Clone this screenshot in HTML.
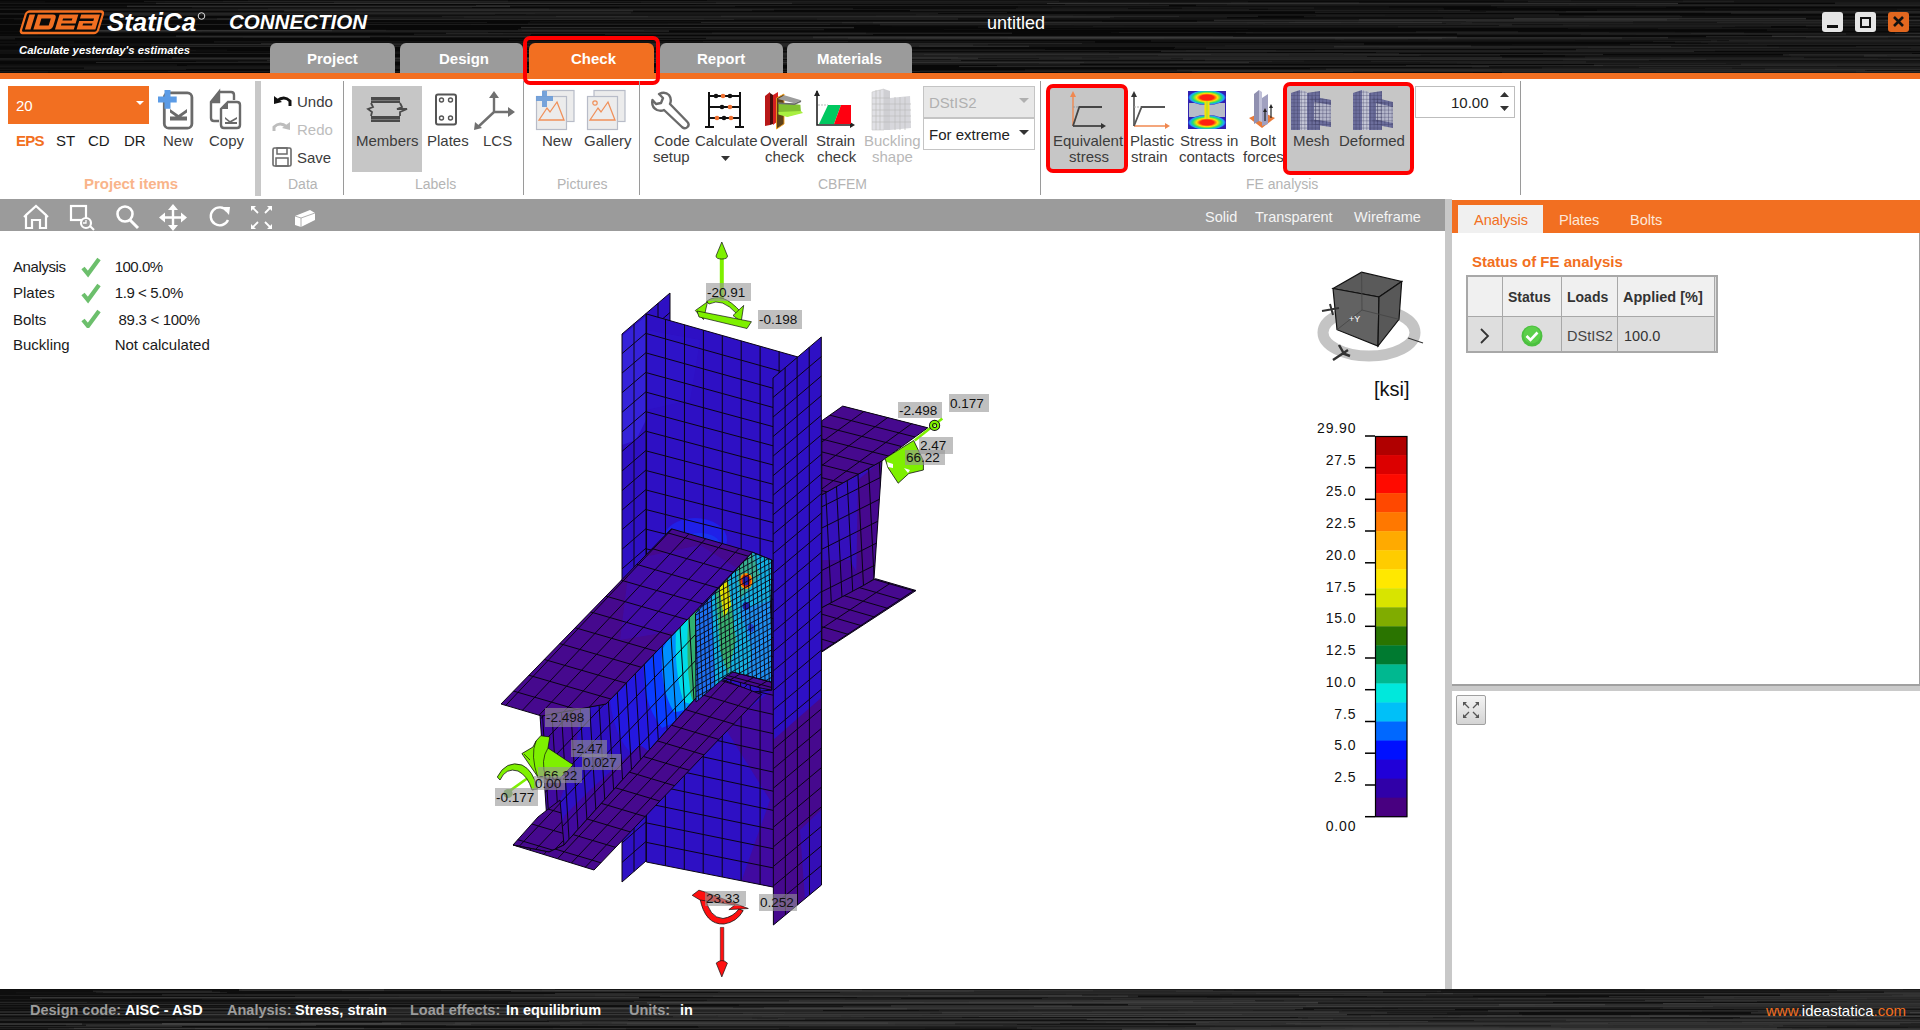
<!DOCTYPE html>
<html><head><meta charset="utf-8"><style>
html,body{margin:0;padding:0;width:1920px;height:1030px;overflow:hidden;background:#fff;position:relative;font-family:"Liberation Sans",sans-serif;}
.a{position:absolute;white-space:pre;line-height:1;}
#title{position:absolute;left:0;top:0;width:1920px;height:73px;overflow:hidden;}
#status{position:absolute;left:0;top:989px;width:1920px;height:41px;overflow:hidden;}
#ostripe{position:absolute;left:0;top:73px;width:1920px;height:6px;background:#f26f21;}
.tab{position:absolute;top:43px;height:30px;background:#9b9b9b;border-radius:6px 6px 0 0;}
.tabt{position:absolute;top:51px;color:#fff;font-weight:bold;font-size:15px;}
.redbox{position:absolute;border:4px solid #ff0000;border-radius:7px;box-sizing:border-box;}
.sep{position:absolute;top:81px;width:1px;height:114px;background:#9a9a9a;}
.rt{position:absolute;font-size:15px;color:#3c3c3c;white-space:pre;line-height:1;}
.glab{position:absolute;top:176.5px;font-size:14px;color:#b4b4b4;white-space:pre;line-height:1;}
.hl{position:absolute;background:#c6c6c6;}
.wbtn{position:absolute;top:12px;width:21px;height:20px;background:#e6e6e6;border-radius:3px;}
.lbl{position:absolute;background:rgba(150,150,150,0.6);font-size:13.5px;color:#111;line-height:1;white-space:pre;}
.res{position:absolute;font-size:15px;color:#1a1a1a;white-space:pre;line-height:1;}
.leg{position:absolute;font-size:14px;color:#111;white-space:pre;line-height:1;text-align:right;width:60px;letter-spacing:0.85px;}
.sb{position:absolute;top:1003px;font-size:14.5px;font-weight:bold;white-space:pre;line-height:1;}

</style></head><body>
<div id="title"><svg width="1920" height="73" style="position:absolute;left:0;top:0"><rect width="1920" height="73" fill="#080808"/><rect x="1597" y="9.8" width="711" height="0.6" fill="rgb(46,46,46)" opacity="0.59"/><rect x="605" y="34.5" width="268" height="0.5" fill="rgb(61,61,61)" opacity="0.62"/><rect x="1416" y="31.6" width="102" height="0.8" fill="rgb(58,58,58)" opacity="0.60"/><rect x="17" y="43.2" width="354" height="0.5" fill="rgb(31,31,31)" opacity="0.48"/><rect x="608" y="68.6" width="273" height="1.3" fill="rgb(57,57,57)" opacity="0.47"/><rect x="1791" y="55.8" width="542" height="0.8" fill="rgb(52,52,52)" opacity="0.33"/><rect x="414" y="33.6" width="117" height="1.5" fill="rgb(65,65,65)" opacity="0.27"/><rect x="1334" y="45.9" width="337" height="1.5" fill="rgb(51,51,51)" opacity="0.69"/><rect x="1850" y="36.6" width="506" height="0.8" fill="rgb(42,42,42)" opacity="0.50"/><rect x="1594" y="64.4" width="504" height="1.4" fill="rgb(67,67,67)" opacity="0.45"/><rect x="657" y="54.3" width="632" height="1.1" fill="rgb(53,53,53)" opacity="0.56"/><rect x="594" y="49.2" width="451" height="0.6" fill="rgb(62,62,62)" opacity="0.30"/><rect x="586" y="61.3" width="686" height="0.5" fill="rgb(60,60,60)" opacity="0.56"/><rect x="1058" y="71.8" width="415" height="0.7" fill="rgb(40,40,40)" opacity="0.33"/><rect x="223" y="0.9" width="836" height="0.8" fill="rgb(65,65,65)" opacity="0.47"/><rect x="1025" y="69.5" width="467" height="1.2" fill="rgb(47,47,47)" opacity="0.51"/><rect x="613" y="53.2" width="786" height="1.4" fill="rgb(62,62,62)" opacity="0.47"/><rect x="703" y="41.0" width="145" height="1.1" fill="rgb(53,53,53)" opacity="0.32"/><rect x="828" y="36.8" width="385" height="0.5" fill="rgb(52,52,52)" opacity="0.48"/><rect x="502" y="57.4" width="580" height="1.2" fill="rgb(44,44,44)" opacity="0.48"/><rect x="-6" y="13.2" width="541" height="0.5" fill="rgb(46,46,46)" opacity="0.67"/><rect x="1640" y="5.1" width="462" height="0.8" fill="rgb(47,47,47)" opacity="0.27"/><rect x="530" y="45.6" width="156" height="0.8" fill="rgb(40,40,40)" opacity="0.68"/><rect x="1174" y="47.9" width="336" height="1.0" fill="rgb(50,50,50)" opacity="0.27"/><rect x="528" y="22.8" width="737" height="0.6" fill="rgb(46,46,46)" opacity="0.65"/><rect x="243" y="37.2" width="585" height="0.7" fill="rgb(31,31,31)" opacity="0.41"/><rect x="1835" y="2.6" width="457" height="1.2" fill="rgb(62,62,62)" opacity="0.48"/><rect x="1868" y="16.1" width="738" height="1.0" fill="rgb(63,63,63)" opacity="0.47"/><rect x="1231" y="2.2" width="743" height="0.6" fill="rgb(57,57,57)" opacity="0.36"/><rect x="1656" y="70.7" width="345" height="0.8" fill="rgb(34,34,34)" opacity="0.67"/><rect x="682" y="54.3" width="302" height="1.1" fill="rgb(30,30,30)" opacity="0.63"/><rect x="261" y="43.1" width="821" height="0.7" fill="rgb(59,59,59)" opacity="0.64"/><rect x="1293" y="71.1" width="507" height="0.7" fill="rgb(54,54,54)" opacity="0.27"/><rect x="1701" y="41.9" width="573" height="0.6" fill="rgb(61,61,61)" opacity="0.54"/><rect x="860" y="21.6" width="360" height="1.5" fill="rgb(55,55,55)" opacity="0.23"/><rect x="495" y="14.7" width="890" height="0.9" fill="rgb(38,38,38)" opacity="0.32"/><rect x="1576" y="49.2" width="846" height="1.5" fill="rgb(52,52,52)" opacity="0.62"/><rect x="1428" y="39.0" width="526" height="1.3" fill="rgb(34,34,34)" opacity="0.26"/><rect x="1731" y="12.4" width="270" height="1.2" fill="rgb(51,51,51)" opacity="0.62"/><rect x="521" y="26.9" width="333" height="1.4" fill="rgb(68,68,68)" opacity="0.56"/><rect x="1030" y="35.7" width="716" height="0.5" fill="rgb(50,50,50)" opacity="0.26"/><rect x="1471" y="63.2" width="763" height="0.6" fill="rgb(51,51,51)" opacity="0.50"/><rect x="-37" y="67.6" width="540" height="0.6" fill="rgb(66,66,66)" opacity="0.35"/><rect x="997" y="65.0" width="840" height="1.5" fill="rgb(59,59,59)" opacity="0.27"/><rect x="427" y="3.3" width="591" height="0.6" fill="rgb(30,30,30)" opacity="0.28"/><rect x="-115" y="64.6" width="292" height="1.0" fill="rgb(67,67,67)" opacity="0.28"/><rect x="312" y="12.2" width="695" height="1.0" fill="rgb(36,36,36)" opacity="0.68"/><rect x="951" y="58.9" width="755" height="0.8" fill="rgb(65,65,65)" opacity="0.45"/><rect x="1182" y="7.3" width="132" height="1.4" fill="rgb(30,30,30)" opacity="0.66"/><rect x="479" y="53.0" width="413" height="0.6" fill="rgb(55,55,55)" opacity="0.66"/><rect x="1856" y="70.8" width="189" height="1.4" fill="rgb(43,43,43)" opacity="0.59"/><rect x="1639" y="65.1" width="475" height="0.8" fill="rgb(52,52,52)" opacity="0.48"/><rect x="322" y="22.4" width="165" height="0.6" fill="rgb(47,47,47)" opacity="0.58"/><rect x="1018" y="6.6" width="371" height="0.9" fill="rgb(44,44,44)" opacity="0.37"/><rect x="471" y="23.9" width="778" height="0.8" fill="rgb(49,49,49)" opacity="0.27"/><rect x="1512" y="44.6" width="174" height="0.5" fill="rgb(44,44,44)" opacity="0.34"/><rect x="969" y="5.3" width="157" height="0.5" fill="rgb(34,34,34)" opacity="0.22"/><rect x="561" y="54.8" width="475" height="0.6" fill="rgb(39,39,39)" opacity="0.59"/><rect x="880" y="24.0" width="632" height="1.4" fill="rgb(41,41,41)" opacity="0.69"/><rect x="478" y="60.0" width="186" height="1.4" fill="rgb(62,62,62)" opacity="0.51"/><rect x="238" y="9.2" width="536" height="1.4" fill="rgb(32,32,32)" opacity="0.61"/><rect x="1225" y="45.5" width="542" height="0.7" fill="rgb(43,43,43)" opacity="0.43"/><rect x="1315" y="11.5" width="634" height="1.4" fill="rgb(46,46,46)" opacity="0.55"/><rect x="712" y="32.6" width="300" height="1.4" fill="rgb(58,58,58)" opacity="0.44"/><rect x="518" y="28.9" width="306" height="1.4" fill="rgb(31,31,31)" opacity="0.67"/><rect x="-160" y="71.3" width="653" height="0.7" fill="rgb(67,67,67)" opacity="0.28"/><rect x="1557" y="18.9" width="418" height="0.7" fill="rgb(55,55,55)" opacity="0.26"/><rect x="176" y="35.5" width="354" height="1.5" fill="rgb(58,58,58)" opacity="0.53"/><rect x="464" y="16.5" width="650" height="1.3" fill="rgb(44,44,44)" opacity="0.38"/><rect x="1344" y="44.6" width="623" height="0.6" fill="rgb(44,44,44)" opacity="0.25"/><rect x="1660" y="37.4" width="228" height="0.8" fill="rgb(43,43,43)" opacity="0.55"/><rect x="588" y="62.0" width="661" height="1.2" fill="rgb(59,59,59)" opacity="0.63"/><rect x="1835" y="65.5" width="557" height="0.7" fill="rgb(41,41,41)" opacity="0.42"/><rect x="1326" y="68.7" width="726" height="1.2" fill="rgb(61,61,61)" opacity="0.56"/><rect x="892" y="25.4" width="232" height="1.1" fill="rgb(32,32,32)" opacity="0.26"/><rect x="14" y="18.6" width="690" height="1.6" fill="rgb(35,35,35)" opacity="0.29"/><rect x="1585" y="56.6" width="628" height="1.0" fill="rgb(35,35,35)" opacity="0.66"/><rect x="611" y="70.9" width="742" height="0.9" fill="rgb(57,57,57)" opacity="0.66"/><rect x="1119" y="32.0" width="490" height="0.6" fill="rgb(43,43,43)" opacity="0.51"/><rect x="50" y="29.8" width="336" height="0.9" fill="rgb(45,45,45)" opacity="0.49"/><rect x="920" y="70.1" width="563" height="1.2" fill="rgb(31,31,31)" opacity="0.51"/><rect x="238" y="61.0" width="328" height="0.7" fill="rgb(64,64,64)" opacity="0.37"/><rect x="1565" y="55.3" width="457" height="1.1" fill="rgb(40,40,40)" opacity="0.46"/><rect x="1430" y="62.5" width="556" height="0.7" fill="rgb(54,54,54)" opacity="0.61"/><rect x="-149" y="66.0" width="555" height="1.1" fill="rgb(30,30,30)" opacity="0.68"/><rect x="1864" y="55.6" width="209" height="0.9" fill="rgb(62,62,62)" opacity="0.61"/><rect x="1236" y="31.9" width="707" height="0.5" fill="rgb(50,50,50)" opacity="0.43"/><rect x="446" y="32.8" width="420" height="1.0" fill="rgb(66,66,66)" opacity="0.53"/><rect x="232" y="27.6" width="103" height="1.2" fill="rgb(47,47,47)" opacity="0.57"/><rect x="1344" y="53.9" width="259" height="1.2" fill="rgb(59,59,59)" opacity="0.47"/><rect x="1310" y="68.4" width="890" height="1.0" fill="rgb(40,40,40)" opacity="0.54"/><rect x="916" y="14.4" width="643" height="1.0" fill="rgb(67,67,67)" opacity="0.41"/><rect x="1039" y="62.9" width="687" height="1.0" fill="rgb(34,34,34)" opacity="0.58"/><rect x="1175" y="46.7" width="604" height="1.3" fill="rgb(56,56,56)" opacity="0.29"/><rect x="642" y="56.9" width="316" height="1.3" fill="rgb(41,41,41)" opacity="0.61"/><rect x="541" y="44.2" width="312" height="1.5" fill="rgb(56,56,56)" opacity="0.48"/><rect x="1566" y="11.1" width="488" height="1.1" fill="rgb(59,59,59)" opacity="0.35"/><rect x="1052" y="7.2" width="156" height="1.2" fill="rgb(34,34,34)" opacity="0.23"/><rect x="1806" y="37.0" width="652" height="1.2" fill="rgb(55,55,55)" opacity="0.35"/><rect x="920" y="22.2" width="290" height="0.8" fill="rgb(51,51,51)" opacity="0.26"/><rect x="909" y="60.6" width="395" height="1.1" fill="rgb(62,62,62)" opacity="0.24"/><rect x="1358" y="21.7" width="897" height="0.8" fill="rgb(65,65,65)" opacity="0.51"/><rect x="989" y="16.9" width="238" height="1.5" fill="rgb(46,46,46)" opacity="0.38"/><rect x="1843" y="16.2" width="665" height="1.4" fill="rgb(31,31,31)" opacity="0.64"/><rect x="1767" y="29.4" width="846" height="1.4" fill="rgb(45,45,45)" opacity="0.31"/><rect x="151" y="45.7" width="878" height="1.1" fill="rgb(58,58,58)" opacity="0.67"/><rect x="1804" y="10.8" width="468" height="0.7" fill="rgb(40,40,40)" opacity="0.29"/><rect x="566" y="52.2" width="701" height="0.6" fill="rgb(45,45,45)" opacity="0.32"/><rect x="-55" y="49.7" width="282" height="1.0" fill="rgb(50,50,50)" opacity="0.27"/><rect x="-83" y="13.6" width="578" height="1.3" fill="rgb(43,43,43)" opacity="0.46"/><rect x="1335" y="38.6" width="810" height="0.9" fill="rgb(58,58,58)" opacity="0.62"/><rect x="1268" y="8.6" width="176" height="0.8" fill="rgb(55,55,55)" opacity="0.44"/><rect x="1864" y="54.8" width="289" height="1.0" fill="rgb(48,48,48)" opacity="0.50"/><rect x="1316" y="15.5" width="364" height="0.6" fill="rgb(67,67,67)" opacity="0.32"/><rect x="-167" y="5.8" width="104" height="0.9" fill="rgb(60,60,60)" opacity="0.40"/><rect x="1748" y="42.4" width="420" height="1.4" fill="rgb(39,39,39)" opacity="0.23"/><rect x="1658" y="28.3" width="534" height="0.9" fill="rgb(66,66,66)" opacity="0.28"/><rect x="1581" y="33.8" width="825" height="1.1" fill="rgb(32,32,32)" opacity="0.47"/><rect x="1779" y="9.4" width="725" height="0.6" fill="rgb(57,57,57)" opacity="0.23"/><rect x="1379" y="46.5" width="649" height="1.2" fill="rgb(42,42,42)" opacity="0.41"/><rect x="1856" y="46.1" width="613" height="0.8" fill="rgb(45,45,45)" opacity="0.50"/><rect x="172" y="57.5" width="443" height="1.2" fill="rgb(65,65,65)" opacity="0.69"/><rect x="959" y="66.1" width="530" height="1.0" fill="rgb(64,64,64)" opacity="0.54"/><rect x="1376" y="52.1" width="677" height="0.8" fill="rgb(34,34,34)" opacity="0.69"/><rect x="1748" y="11.0" width="784" height="0.6" fill="rgb(32,32,32)" opacity="0.26"/><rect x="795" y="59.4" width="396" height="0.5" fill="rgb(50,50,50)" opacity="0.48"/><rect x="72" y="32.4" width="416" height="0.5" fill="rgb(58,58,58)" opacity="0.47"/><rect x="1497" y="6.6" width="169" height="1.4" fill="rgb(32,32,32)" opacity="0.25"/><rect x="1359" y="19.1" width="308" height="1.4" fill="rgb(54,54,54)" opacity="0.63"/><rect x="701" y="22.2" width="296" height="0.7" fill="rgb(65,65,65)" opacity="0.66"/><rect x="629" y="37.2" width="817" height="0.6" fill="rgb(60,60,60)" opacity="0.53"/><rect x="1895" y="32.7" width="676" height="1.3" fill="rgb(67,67,67)" opacity="0.48"/><rect x="1563" y="65.5" width="333" height="0.7" fill="rgb(40,40,40)" opacity="0.41"/><rect x="668" y="23.7" width="201" height="0.5" fill="rgb(34,34,34)" opacity="0.61"/><rect x="465" y="47.5" width="339" height="0.8" fill="rgb(52,52,52)" opacity="0.58"/><rect x="-182" y="38.0" width="197" height="1.5" fill="rgb(50,50,50)" opacity="0.38"/><rect x="-54" y="23.9" width="884" height="1.0" fill="rgb(60,60,60)" opacity="0.39"/><rect x="607" y="54.1" width="812" height="1.5" fill="rgb(35,35,35)" opacity="0.60"/><rect x="910" y="9.8" width="560" height="1.4" fill="rgb(46,46,46)" opacity="0.56"/><rect x="567" y="54.5" width="854" height="0.9" fill="rgb(53,53,53)" opacity="0.44"/><rect x="928" y="71.5" width="234" height="0.8" fill="rgb(39,39,39)" opacity="0.33"/><rect x="39" y="9.7" width="713" height="1.4" fill="rgb(33,33,33)" opacity="0.69"/><rect x="1315" y="49.7" width="263" height="1.2" fill="rgb(34,34,34)" opacity="0.47"/><rect x="-46" y="5.7" width="781" height="1.1" fill="rgb(41,41,41)" opacity="0.43"/><rect x="1708" y="43.1" width="489" height="0.7" fill="rgb(48,48,48)" opacity="0.32"/><rect x="1706" y="36.0" width="288" height="1.2" fill="rgb(58,58,58)" opacity="0.48"/><rect x="1492" y="69.0" width="681" height="0.9" fill="rgb(46,46,46)" opacity="0.22"/><rect x="607" y="38.8" width="801" height="0.9" fill="rgb(34,34,34)" opacity="0.64"/><rect x="1039" y="58.1" width="132" height="0.5" fill="rgb(59,59,59)" opacity="0.68"/><rect x="1161" y="50.8" width="533" height="1.1" fill="rgb(49,49,49)" opacity="0.70"/><rect x="1446" y="23.0" width="616" height="0.8" fill="rgb(65,65,65)" opacity="0.42"/><rect x="1765" y="68.6" width="514" height="1.2" fill="rgb(68,68,68)" opacity="0.37"/><rect x="873" y="22.0" width="569" height="1.3" fill="rgb(65,65,65)" opacity="0.69"/><rect x="-180" y="18.5" width="439" height="0.5" fill="rgb(66,66,66)" opacity="0.42"/><rect x="1197" y="20.6" width="701" height="1.5" fill="rgb(31,31,31)" opacity="0.66"/><rect x="613" y="61.8" width="471" height="1.2" fill="rgb(53,53,53)" opacity="0.63"/><rect x="624" y="56.1" width="743" height="0.9" fill="rgb(60,60,60)" opacity="0.42"/><rect x="165" y="1.3" width="308" height="1.1" fill="rgb(38,38,38)" opacity="0.36"/><rect x="347" y="72.8" width="511" height="1.3" fill="rgb(56,56,56)" opacity="0.43"/><rect x="830" y="56.7" width="672" height="1.5" fill="rgb(61,61,61)" opacity="0.41"/><rect x="-63" y="31.0" width="265" height="0.8" fill="rgb(39,39,39)" opacity="0.23"/><rect x="817" y="18.5" width="862" height="1.2" fill="rgb(55,55,55)" opacity="0.31"/><rect x="707" y="0.2" width="864" height="1.1" fill="rgb(33,33,33)" opacity="0.48"/><rect x="1806" y="25.3" width="876" height="1.3" fill="rgb(36,36,36)" opacity="0.55"/><rect x="1371" y="60.9" width="896" height="0.7" fill="rgb(47,47,47)" opacity="0.61"/><rect x="-99" y="51.4" width="271" height="1.5" fill="rgb(35,35,35)" opacity="0.28"/><rect x="1246" y="32.7" width="498" height="0.6" fill="rgb(55,55,55)" opacity="0.63"/><rect x="619" y="7.7" width="824" height="0.7" fill="rgb(42,42,42)" opacity="0.34"/><rect x="1783" y="54.3" width="529" height="1.2" fill="rgb(61,61,61)" opacity="0.61"/><rect x="1472" y="66.7" width="599" height="0.6" fill="rgb(61,61,61)" opacity="0.58"/><rect x="535" y="53.2" width="808" height="0.6" fill="rgb(47,47,47)" opacity="0.52"/><rect x="1717" y="21.9" width="181" height="0.8" fill="rgb(62,62,62)" opacity="0.56"/><rect x="76" y="30.0" width="256" height="1.2" fill="rgb(65,65,65)" opacity="0.65"/><rect x="1569" y="4.3" width="507" height="0.8" fill="rgb(56,56,56)" opacity="0.45"/><rect x="842" y="22.3" width="499" height="1.0" fill="rgb(68,68,68)" opacity="0.38"/><rect x="184" y="44.2" width="804" height="1.1" fill="rgb(58,58,58)" opacity="0.25"/><rect x="1263" y="23.8" width="616" height="0.8" fill="rgb(43,43,43)" opacity="0.46"/><rect x="71" y="24.1" width="212" height="0.7" fill="rgb(46,46,46)" opacity="0.52"/><rect x="-94" y="60.5" width="238" height="0.7" fill="rgb(37,37,37)" opacity="0.32"/><rect x="1675" y="41.4" width="438" height="1.4" fill="rgb(30,30,30)" opacity="0.61"/><rect x="267" y="60.0" width="694" height="1.2" fill="rgb(47,47,47)" opacity="0.69"/><rect x="1074" y="24.9" width="515" height="0.6" fill="rgb(31,31,31)" opacity="0.39"/><rect x="1705" y="8.3" width="215" height="0.5" fill="rgb(66,66,66)" opacity="0.26"/><rect x="19" y="52.9" width="354" height="1.1" fill="rgb(47,47,47)" opacity="0.39"/><rect x="1763" y="5.7" width="398" height="0.6" fill="rgb(45,45,45)" opacity="0.38"/><rect x="1683" y="0.6" width="867" height="0.9" fill="rgb(37,37,37)" opacity="0.61"/><rect x="1588" y="46.8" width="585" height="0.9" fill="rgb(47,47,47)" opacity="0.55"/><rect x="919" y="45.3" width="552" height="1.5" fill="rgb(64,64,64)" opacity="0.36"/><rect x="442" y="16.0" width="206" height="1.1" fill="rgb(68,68,68)" opacity="0.30"/><rect x="721" y="15.7" width="537" height="1.1" fill="rgb(46,46,46)" opacity="0.67"/><rect x="67" y="19.1" width="667" height="0.6" fill="rgb(53,53,53)" opacity="0.69"/><rect x="978" y="26.5" width="744" height="1.3" fill="rgb(62,62,62)" opacity="0.23"/><rect x="1247" y="22.5" width="225" height="0.7" fill="rgb(67,67,67)" opacity="0.64"/><rect x="1584" y="15.8" width="779" height="0.9" fill="rgb(51,51,51)" opacity="0.36"/><rect x="1486" y="11.4" width="767" height="0.6" fill="rgb(55,55,55)" opacity="0.51"/><rect x="1214" y="19.7" width="740" height="1.5" fill="rgb(68,68,68)" opacity="0.48"/><rect x="1528" y="0.7" width="206" height="1.5" fill="rgb(65,65,65)" opacity="0.27"/><rect x="716" y="2.2" width="643" height="1.5" fill="rgb(47,47,47)" opacity="0.42"/><rect x="-87" y="44.2" width="477" height="1.2" fill="rgb(32,32,32)" opacity="0.55"/><rect x="1563" y="59.3" width="570" height="1.1" fill="rgb(63,63,63)" opacity="0.39"/><rect x="1885" y="19.8" width="827" height="1.4" fill="rgb(52,52,52)" opacity="0.61"/><rect x="1514" y="17.9" width="292" height="1.5" fill="rgb(65,65,65)" opacity="0.64"/><rect x="-114" y="8.5" width="663" height="1.5" fill="rgb(57,57,57)" opacity="0.39"/><rect x="1911" y="48.0" width="718" height="1.2" fill="rgb(33,33,33)" opacity="0.42"/><rect x="1398" y="26.2" width="373" height="1.2" fill="rgb(45,45,45)" opacity="0.47"/><rect x="1227" y="4.1" width="813" height="1.1" fill="rgb(41,41,41)" opacity="0.52"/><rect x="1406" y="65.3" width="197" height="0.5" fill="rgb(67,67,67)" opacity="0.65"/><rect x="1568" y="28.0" width="240" height="0.6" fill="rgb(44,44,44)" opacity="0.38"/><rect x="1192" y="70.8" width="728" height="1.3" fill="rgb(59,59,59)" opacity="0.40"/><rect x="1206" y="47.6" width="849" height="1.0" fill="rgb(57,57,57)" opacity="0.48"/><rect x="1765" y="41.7" width="772" height="0.5" fill="rgb(39,39,39)" opacity="0.42"/><rect x="1183" y="58.3" width="853" height="1.3" fill="rgb(59,59,59)" opacity="0.54"/><rect x="412" y="58.2" width="224" height="1.4" fill="rgb(63,63,63)" opacity="0.67"/><rect x="641" y="1.4" width="607" height="1.1" fill="rgb(44,44,44)" opacity="0.41"/><rect x="1504" y="0.4" width="886" height="1.2" fill="rgb(40,40,40)" opacity="0.38"/><rect x="1443" y="17.5" width="848" height="0.7" fill="rgb(40,40,40)" opacity="0.50"/><rect x="706" y="37.5" width="736" height="1.3" fill="rgb(63,63,63)" opacity="0.56"/><rect x="1186" y="50.4" width="529" height="0.9" fill="rgb(45,45,45)" opacity="0.44"/><rect x="-98" y="41.4" width="172" height="1.2" fill="rgb(36,36,36)" opacity="0.45"/><rect x="307" y="71.4" width="110" height="1.0" fill="rgb(49,49,49)" opacity="0.57"/><rect x="82" y="12.2" width="549" height="1.3" fill="rgb(50,50,50)" opacity="0.53"/><rect x="1502" y="72.4" width="543" height="1.3" fill="rgb(55,55,55)" opacity="0.61"/><rect x="390" y="36.2" width="843" height="1.1" fill="rgb(46,46,46)" opacity="0.63"/><rect x="1119" y="57.0" width="685" height="1.5" fill="rgb(51,51,51)" opacity="0.34"/><rect x="615" y="18.4" width="552" height="0.7" fill="rgb(30,30,30)" opacity="0.28"/><rect x="217" y="18.4" width="741" height="1.2" fill="rgb(64,64,64)" opacity="0.48"/><rect x="308" y="52.3" width="211" height="0.9" fill="rgb(59,59,59)" opacity="0.31"/><rect x="-36" y="45.7" width="729" height="0.5" fill="rgb(33,33,33)" opacity="0.41"/><rect x="91" y="30.5" width="578" height="1.1" fill="rgb(64,64,64)" opacity="0.67"/><rect x="96" y="62.0" width="262" height="0.9" fill="rgb(55,55,55)" opacity="0.62"/><rect x="1304" y="16.4" width="378" height="0.8" fill="rgb(64,64,64)" opacity="0.47"/><rect x="1295" y="21.8" width="118" height="0.6" fill="rgb(67,67,67)" opacity="0.40"/><rect x="1111" y="32.4" width="142" height="0.7" fill="rgb(50,50,50)" opacity="0.28"/><rect x="1542" y="67.4" width="190" height="1.2" fill="rgb(57,57,57)" opacity="0.34"/><rect x="876" y="15.2" width="197" height="1.4" fill="rgb(43,43,43)" opacity="0.40"/><rect x="84" y="67.4" width="673" height="1.3" fill="rgb(46,46,46)" opacity="0.56"/><rect x="1891" y="59.0" width="550" height="1.1" fill="rgb(60,60,60)" opacity="0.33"/><rect x="156" y="2.8" width="636" height="1.1" fill="rgb(65,65,65)" opacity="0.63"/><rect x="1430" y="70.6" width="437" height="1.0" fill="rgb(47,47,47)" opacity="0.54"/><rect x="196" y="60.9" width="113" height="1.0" fill="rgb(32,32,32)" opacity="0.41"/><rect x="1543" y="53.3" width="369" height="0.6" fill="rgb(45,45,45)" opacity="0.55"/><rect x="696" y="3.1" width="453" height="1.2" fill="rgb(41,41,41)" opacity="0.31"/><rect x="906" y="37.2" width="258" height="1.2" fill="rgb(53,53,53)" opacity="0.50"/><rect x="1887" y="55.3" width="373" height="1.0" fill="rgb(33,33,33)" opacity="0.62"/><rect x="113" y="12.9" width="825" height="1.0" fill="rgb(48,48,48)" opacity="0.50"/><rect x="1636" y="4.7" width="552" height="1.6" fill="rgb(35,35,35)" opacity="0.60"/><rect x="1170" y="61.5" width="416" height="1.0" fill="rgb(52,52,52)" opacity="0.67"/><rect x="1729" y="40.3" width="482" height="0.8" fill="rgb(57,57,57)" opacity="0.58"/><rect x="1064" y="58.1" width="545" height="0.6" fill="rgb(47,47,47)" opacity="0.51"/><rect x="565" y="57.7" width="413" height="1.4" fill="rgb(63,63,63)" opacity="0.50"/><rect x="1016" y="8.3" width="112" height="0.9" fill="rgb(51,51,51)" opacity="0.40"/><rect x="1151" y="40.2" width="566" height="1.5" fill="rgb(61,61,61)" opacity="0.26"/><rect x="509" y="39.4" width="835" height="0.5" fill="rgb(64,64,64)" opacity="0.30"/><rect x="254" y="23.7" width="817" height="1.1" fill="rgb(39,39,39)" opacity="0.41"/><rect x="692" y="63.3" width="388" height="1.4" fill="rgb(51,51,51)" opacity="0.51"/><rect x="-65" y="2.7" width="605" height="1.3" fill="rgb(46,46,46)" opacity="0.41"/><rect x="1466" y="20.7" width="167" height="1.5" fill="rgb(40,40,40)" opacity="0.68"/><rect x="68" y="30.2" width="541" height="0.8" fill="rgb(46,46,46)" opacity="0.27"/><rect x="-100" y="52.7" width="510" height="1.4" fill="rgb(43,43,43)" opacity="0.26"/><rect x="1763" y="23.0" width="788" height="0.5" fill="rgb(38,38,38)" opacity="0.61"/><rect x="-121" y="58.3" width="891" height="1.3" fill="rgb(56,56,56)" opacity="0.65"/><rect x="1047" y="3.0" width="631" height="1.0" fill="rgb(63,63,63)" opacity="0.69"/><rect x="43" y="14.4" width="204" height="1.1" fill="rgb(67,67,67)" opacity="0.57"/><rect x="1457" y="33.5" width="389" height="0.9" fill="rgb(59,59,59)" opacity="0.68"/><rect x="266" y="52.8" width="846" height="0.5" fill="rgb(30,30,30)" opacity="0.45"/><rect x="1705" y="12.0" width="132" height="1.3" fill="rgb(44,44,44)" opacity="0.26"/><rect x="-126" y="59.6" width="523" height="1.0" fill="rgb(43,43,43)" opacity="0.34"/><rect x="489" y="36.9" width="856" height="0.7" fill="rgb(34,34,34)" opacity="0.31"/><rect x="430" y="50.0" width="846" height="1.2" fill="rgb(57,57,57)" opacity="0.39"/><rect x="1772" y="35.6" width="627" height="1.2" fill="rgb(66,66,66)" opacity="0.68"/><rect x="1300" y="31.6" width="375" height="1.2" fill="rgb(34,34,34)" opacity="0.31"/><rect x="848" y="37.5" width="774" height="1.1" fill="rgb(68,68,68)" opacity="0.48"/><rect x="813" y="36.6" width="644" height="1.5" fill="rgb(66,66,66)" opacity="0.59"/><rect x="151" y="44.1" width="315" height="0.8" fill="rgb(63,63,63)" opacity="0.59"/><rect x="944" y="28.9" width="304" height="1.2" fill="rgb(30,30,30)" opacity="0.24"/><rect x="1691" y="33.4" width="286" height="0.7" fill="rgb(58,58,58)" opacity="0.45"/><rect x="1896" y="24.5" width="216" height="0.6" fill="rgb(57,57,57)" opacity="0.27"/><rect x="1741" y="63.6" width="305" height="1.3" fill="rgb(64,64,64)" opacity="0.37"/><rect x="517" y="1.1" width="571" height="0.7" fill="rgb(33,33,33)" opacity="0.26"/><rect x="1897" y="8.8" width="616" height="1.4" fill="rgb(38,38,38)" opacity="0.36"/><rect x="522" y="29.9" width="122" height="1.3" fill="rgb(41,41,41)" opacity="0.58"/><rect x="1158" y="54.7" width="342" height="1.0" fill="rgb(54,54,54)" opacity="0.47"/><rect x="1636" y="33.7" width="159" height="0.9" fill="rgb(42,42,42)" opacity="0.33"/><rect x="310" y="3.1" width="280" height="0.9" fill="rgb(55,55,55)" opacity="0.52"/><rect x="434" y="52.6" width="675" height="0.5" fill="rgb(53,53,53)" opacity="0.56"/><rect x="856" y="22.4" width="640" height="1.6" fill="rgb(31,31,31)" opacity="0.43"/><rect x="1499" y="25.0" width="492" height="0.6" fill="rgb(68,68,68)" opacity="0.53"/><rect x="1205" y="59.2" width="444" height="1.3" fill="rgb(49,49,49)" opacity="0.53"/><rect x="268" y="8.4" width="585" height="1.0" fill="rgb(46,46,46)" opacity="0.60"/><rect x="1065" y="4.0" width="511" height="0.6" fill="rgb(40,40,40)" opacity="0.66"/><rect x="-55" y="71.4" width="103" height="1.0" fill="rgb(33,33,33)" opacity="0.56"/><rect x="-83" y="1.5" width="128" height="0.9" fill="rgb(51,51,51)" opacity="0.23"/><rect x="248" y="0.6" width="260" height="1.1" fill="rgb(48,48,48)" opacity="0.47"/><rect x="187" y="64.9" width="413" height="0.8" fill="rgb(33,33,33)" opacity="0.49"/><rect x="503" y="33.0" width="425" height="1.1" fill="rgb(31,31,31)" opacity="0.46"/><rect x="192" y="6.8" width="280" height="1.5" fill="rgb(49,49,49)" opacity="0.27"/><rect x="1661" y="58.0" width="217" height="0.7" fill="rgb(58,58,58)" opacity="0.24"/><rect x="530" y="20.9" width="572" height="0.7" fill="rgb(58,58,58)" opacity="0.33"/><rect x="-78" y="13.5" width="143" height="0.6" fill="rgb(37,37,37)" opacity="0.60"/><rect x="1789" y="54.2" width="671" height="1.0" fill="rgb(63,63,63)" opacity="0.34"/><rect x="334" y="2.4" width="256" height="0.9" fill="rgb(52,52,52)" opacity="0.59"/><rect x="1639" y="67.3" width="406" height="0.6" fill="rgb(54,54,54)" opacity="0.67"/><rect x="837" y="60.7" width="375" height="1.2" fill="rgb(41,41,41)" opacity="0.27"/><rect x="1491" y="5.3" width="808" height="0.8" fill="rgb(64,64,64)" opacity="0.69"/><rect x="1563" y="24.5" width="427" height="0.9" fill="rgb(53,53,53)" opacity="0.41"/><rect x="-164" y="34.4" width="202" height="0.8" fill="rgb(40,40,40)" opacity="0.28"/><rect x="1341" y="40.0" width="234" height="0.6" fill="rgb(39,39,39)" opacity="0.26"/><rect x="299" y="44.7" width="616" height="0.8" fill="rgb(40,40,40)" opacity="0.45"/><rect x="127" y="5.6" width="383" height="1.5" fill="rgb(58,58,58)" opacity="0.63"/><rect x="-53" y="50.0" width="249" height="0.5" fill="rgb(64,64,64)" opacity="0.24"/><rect x="1177" y="69.7" width="688" height="1.1" fill="rgb(53,53,53)" opacity="0.64"/><rect x="1457" y="62.6" width="602" height="0.9" fill="rgb(53,53,53)" opacity="0.28"/><rect x="-131" y="69.2" width="317" height="0.6" fill="rgb(43,43,43)" opacity="0.62"/><rect x="994" y="22.2" width="295" height="0.8" fill="rgb(33,33,33)" opacity="0.36"/><rect x="214" y="41.5" width="881" height="0.9" fill="rgb(44,44,44)" opacity="0.65"/><rect x="284" y="10.3" width="349" height="1.1" fill="rgb(62,62,62)" opacity="0.65"/><rect x="1630" y="43.8" width="731" height="1.1" fill="rgb(58,58,58)" opacity="0.45"/><rect x="554" y="37.4" width="446" height="0.8" fill="rgb(34,34,34)" opacity="0.33"/><rect x="1438" y="10.4" width="117" height="0.9" fill="rgb(61,61,61)" opacity="0.24"/><rect x="1093" y="26.3" width="642" height="0.6" fill="rgb(43,43,43)" opacity="0.53"/><rect x="526" y="14.3" width="560" height="0.7" fill="rgb(31,31,31)" opacity="0.65"/><rect x="1711" y="40.3" width="783" height="1.1" fill="rgb(61,61,61)" opacity="0.29"/><rect x="476" y="5.0" width="693" height="1.2" fill="rgb(66,66,66)" opacity="0.37"/><rect x="1461" y="23.2" width="172" height="1.0" fill="rgb(51,51,51)" opacity="0.25"/><rect x="1196" y="4.6" width="787" height="1.6" fill="rgb(31,31,31)" opacity="0.66"/><rect x="356" y="16.5" width="754" height="1.5" fill="rgb(49,49,49)" opacity="0.42"/><rect x="144" y="0.9" width="333" height="1.0" fill="rgb(37,37,37)" opacity="0.67"/><rect x="556" y="15.9" width="623" height="1.0" fill="rgb(66,66,66)" opacity="0.36"/><rect x="165" y="18.7" width="214" height="0.9" fill="rgb(36,36,36)" opacity="0.47"/><rect x="1653" y="41.4" width="417" height="0.7" fill="rgb(58,58,58)" opacity="0.45"/><rect x="-120" y="50.9" width="612" height="1.3" fill="rgb(35,35,35)" opacity="0.24"/><rect x="1008" y="37.0" width="660" height="1.4" fill="rgb(63,63,63)" opacity="0.49"/><rect x="-172" y="36.3" width="542" height="1.4" fill="rgb(65,65,65)" opacity="0.44"/><rect x="591" y="43.3" width="773" height="1.4" fill="rgb(53,53,53)" opacity="0.43"/><rect x="1204" y="50.2" width="343" height="1.0" fill="rgb(35,35,35)" opacity="0.64"/><rect x="85" y="14.3" width="844" height="1.5" fill="rgb(32,32,32)" opacity="0.49"/><rect x="168" y="70.8" width="492" height="1.1" fill="rgb(30,30,30)" opacity="0.64"/><rect x="742" y="44.5" width="231" height="1.6" fill="rgb(43,43,43)" opacity="0.70"/><rect x="356" y="9.0" width="893" height="0.6" fill="rgb(51,51,51)" opacity="0.61"/><rect x="924" y="54.1" width="287" height="1.0" fill="rgb(57,57,57)" opacity="0.47"/></svg></div>
<div id="status"><svg width="1920" height="41" style="position:absolute;left:0;top:0"><rect width="1920" height="41" fill="#0e0e0e"/><rect x="1809" y="39.2" width="145" height="0.9" fill="rgb(45,45,45)" opacity="0.38"/><rect x="1610" y="33.2" width="301" height="1.2" fill="rgb(53,53,53)" opacity="0.59"/><rect x="713" y="6.5" width="415" height="1.5" fill="rgb(72,72,72)" opacity="0.57"/><rect x="369" y="18.2" width="129" height="0.9" fill="rgb(41,41,41)" opacity="0.77"/><rect x="698" y="37.2" width="807" height="1.1" fill="rgb(50,50,50)" opacity="0.42"/><rect x="489" y="1.0" width="209" height="0.9" fill="rgb(72,72,72)" opacity="0.56"/><rect x="1910" y="23.0" width="457" height="1.3" fill="rgb(66,66,66)" opacity="0.75"/><rect x="1474" y="31.3" width="383" height="0.7" fill="rgb(68,68,68)" opacity="0.68"/><rect x="778" y="29.3" width="524" height="0.8" fill="rgb(71,71,71)" opacity="0.55"/><rect x="1488" y="21.1" width="629" height="1.5" fill="rgb(69,69,69)" opacity="0.53"/><rect x="1751" y="23.3" width="679" height="1.2" fill="rgb(71,71,71)" opacity="0.77"/><rect x="1570" y="33.4" width="801" height="0.8" fill="rgb(79,79,79)" opacity="0.76"/><rect x="1830" y="12.7" width="665" height="1.1" fill="rgb(72,72,72)" opacity="0.55"/><rect x="662" y="25.2" width="685" height="1.1" fill="rgb(71,71,71)" opacity="0.77"/><rect x="-40" y="25.6" width="756" height="1.5" fill="rgb(40,40,40)" opacity="0.40"/><rect x="-75" y="30.5" width="622" height="1.2" fill="rgb(57,57,57)" opacity="0.64"/><rect x="1399" y="37.5" width="209" height="0.8" fill="rgb(57,57,57)" opacity="0.41"/><rect x="697" y="36.1" width="674" height="0.6" fill="rgb(42,42,42)" opacity="0.48"/><rect x="-150" y="10.2" width="192" height="0.5" fill="rgb(44,44,44)" opacity="0.66"/><rect x="342" y="0.9" width="751" height="1.3" fill="rgb(50,50,50)" opacity="0.56"/><rect x="1050" y="0.1" width="735" height="0.7" fill="rgb(55,55,55)" opacity="0.32"/><rect x="1104" y="14.1" width="694" height="0.8" fill="rgb(47,47,47)" opacity="0.54"/><rect x="969" y="12.6" width="584" height="1.5" fill="rgb(42,42,42)" opacity="0.68"/><rect x="1295" y="35.4" width="478" height="0.6" fill="rgb(54,54,54)" opacity="0.64"/><rect x="-149" y="34.4" width="731" height="1.1" fill="rgb(48,48,48)" opacity="0.69"/><rect x="495" y="20.0" width="800" height="0.8" fill="rgb(61,61,61)" opacity="0.60"/><rect x="-162" y="17.2" width="546" height="1.2" fill="rgb(48,48,48)" opacity="0.43"/><rect x="162" y="5.4" width="463" height="1.1" fill="rgb(54,54,54)" opacity="0.79"/><rect x="1908" y="38.3" width="286" height="0.6" fill="rgb(68,68,68)" opacity="0.34"/><rect x="1478" y="9.4" width="599" height="0.8" fill="rgb(63,63,63)" opacity="0.51"/><rect x="-190" y="21.6" width="128" height="0.7" fill="rgb(66,66,66)" opacity="0.56"/><rect x="16" y="3.6" width="116" height="0.6" fill="rgb(54,54,54)" opacity="0.31"/><rect x="762" y="27.4" width="528" height="0.7" fill="rgb(64,64,64)" opacity="0.75"/><rect x="1345" y="39.5" width="447" height="0.5" fill="rgb(72,72,72)" opacity="0.60"/><rect x="1769" y="36.1" width="565" height="1.2" fill="rgb(46,46,46)" opacity="0.54"/><rect x="1837" y="0.8" width="195" height="0.8" fill="rgb(63,63,63)" opacity="0.79"/><rect x="-160" y="15.3" width="648" height="0.6" fill="rgb(46,46,46)" opacity="0.40"/><rect x="1550" y="31.8" width="750" height="1.0" fill="rgb(43,43,43)" opacity="0.54"/><rect x="1048" y="8.5" width="159" height="0.5" fill="rgb(58,58,58)" opacity="0.45"/><rect x="265" y="29.7" width="492" height="1.1" fill="rgb(47,47,47)" opacity="0.50"/><rect x="1398" y="19.0" width="416" height="0.8" fill="rgb(47,47,47)" opacity="0.36"/><rect x="509" y="25.3" width="413" height="1.3" fill="rgb(53,53,53)" opacity="0.31"/><rect x="1448" y="27.0" width="679" height="0.8" fill="rgb(71,71,71)" opacity="0.78"/><rect x="595" y="5.8" width="487" height="1.3" fill="rgb(70,70,70)" opacity="0.66"/><rect x="843" y="17.2" width="644" height="0.8" fill="rgb(65,65,65)" opacity="0.54"/><rect x="707" y="10.6" width="643" height="1.1" fill="rgb(45,45,45)" opacity="0.71"/><rect x="555" y="3.9" width="898" height="1.4" fill="rgb(49,49,49)" opacity="0.75"/><rect x="1732" y="32.7" width="645" height="0.6" fill="rgb(42,42,42)" opacity="0.45"/><rect x="1222" y="9.5" width="645" height="0.7" fill="rgb(68,68,68)" opacity="0.44"/><rect x="1892" y="6.4" width="875" height="0.6" fill="rgb(67,67,67)" opacity="0.56"/><rect x="345" y="29.3" width="816" height="1.5" fill="rgb(69,69,69)" opacity="0.42"/><rect x="560" y="35.9" width="711" height="1.0" fill="rgb(49,49,49)" opacity="0.66"/><rect x="612" y="33.2" width="689" height="1.1" fill="rgb(65,65,65)" opacity="0.54"/><rect x="1306" y="16.6" width="849" height="0.9" fill="rgb(70,70,70)" opacity="0.57"/><rect x="1733" y="29.2" width="165" height="1.1" fill="rgb(54,54,54)" opacity="0.39"/><rect x="611" y="33.5" width="805" height="0.8" fill="rgb(40,40,40)" opacity="0.56"/><rect x="789" y="37.2" width="242" height="0.5" fill="rgb(46,46,46)" opacity="0.77"/><rect x="1086" y="29.9" width="824" height="0.9" fill="rgb(46,46,46)" opacity="0.58"/><rect x="382" y="32.9" width="837" height="0.7" fill="rgb(77,77,77)" opacity="0.70"/><rect x="1098" y="5.7" width="448" height="1.1" fill="rgb(56,56,56)" opacity="0.39"/><rect x="1861" y="29.2" width="708" height="0.5" fill="rgb(62,62,62)" opacity="0.54"/><rect x="1196" y="34.3" width="704" height="1.5" fill="rgb(71,71,71)" opacity="0.76"/><rect x="1660" y="18.8" width="468" height="1.2" fill="rgb(45,45,45)" opacity="0.47"/><rect x="1790" y="31.1" width="898" height="1.2" fill="rgb(56,56,56)" opacity="0.69"/><rect x="86" y="35.4" width="230" height="1.6" fill="rgb(64,64,64)" opacity="0.64"/><rect x="399" y="6.4" width="474" height="0.9" fill="rgb(40,40,40)" opacity="0.57"/><rect x="739" y="15.7" width="796" height="1.0" fill="rgb(59,59,59)" opacity="0.37"/><rect x="1308" y="28.3" width="342" height="1.4" fill="rgb(56,56,56)" opacity="0.45"/><rect x="1487" y="26.5" width="623" height="1.1" fill="rgb(65,65,65)" opacity="0.76"/><rect x="246" y="20.8" width="577" height="1.4" fill="rgb(49,49,49)" opacity="0.61"/><rect x="294" y="12.6" width="466" height="1.1" fill="rgb(54,54,54)" opacity="0.33"/><rect x="1232" y="4.6" width="730" height="0.7" fill="rgb(63,63,63)" opacity="0.48"/><rect x="569" y="13.7" width="498" height="1.0" fill="rgb(58,58,58)" opacity="0.37"/><rect x="1900" y="29.5" width="273" height="0.9" fill="rgb(57,57,57)" opacity="0.35"/><rect x="202" y="9.8" width="643" height="0.7" fill="rgb(63,63,63)" opacity="0.37"/><rect x="370" y="5.6" width="540" height="0.9" fill="rgb(64,64,64)" opacity="0.71"/><rect x="1663" y="14.0" width="841" height="1.1" fill="rgb(72,72,72)" opacity="0.67"/><rect x="647" y="13.1" width="671" height="1.3" fill="rgb(80,80,80)" opacity="0.79"/><rect x="1120" y="12.0" width="637" height="0.8" fill="rgb(63,63,63)" opacity="0.54"/><rect x="1711" y="10.6" width="453" height="1.5" fill="rgb(45,45,45)" opacity="0.39"/><rect x="69" y="39.4" width="122" height="0.7" fill="rgb(62,62,62)" opacity="0.34"/><rect x="1353" y="36.0" width="621" height="1.1" fill="rgb(40,40,40)" opacity="0.42"/><rect x="627" y="34.2" width="328" height="1.5" fill="rgb(80,80,80)" opacity="0.48"/><rect x="857" y="8.3" width="877" height="0.9" fill="rgb(53,53,53)" opacity="0.37"/><rect x="-11" y="14.8" width="250" height="1.3" fill="rgb(55,55,55)" opacity="0.32"/><rect x="1174" y="38.5" width="589" height="0.7" fill="rgb(49,49,49)" opacity="0.33"/><rect x="376" y="18.2" width="357" height="1.4" fill="rgb(76,76,76)" opacity="0.47"/><rect x="1094" y="31.5" width="416" height="0.9" fill="rgb(43,43,43)" opacity="0.54"/><rect x="472" y="25.4" width="770" height="0.6" fill="rgb(78,78,78)" opacity="0.56"/><rect x="851" y="27.3" width="421" height="0.7" fill="rgb(69,69,69)" opacity="0.49"/><rect x="1663" y="18.6" width="461" height="0.6" fill="rgb(77,77,77)" opacity="0.77"/><rect x="1740" y="27.9" width="162" height="1.0" fill="rgb(59,59,59)" opacity="0.65"/><rect x="1218" y="10.4" width="276" height="0.7" fill="rgb(41,41,41)" opacity="0.63"/><rect x="1860" y="3.8" width="619" height="1.4" fill="rgb(43,43,43)" opacity="0.54"/><rect x="96" y="2.6" width="124" height="1.1" fill="rgb(72,72,72)" opacity="0.32"/><rect x="-187" y="22.4" width="751" height="1.3" fill="rgb(61,61,61)" opacity="0.74"/><rect x="843" y="5.7" width="205" height="0.8" fill="rgb(47,47,47)" opacity="0.53"/><rect x="1106" y="32.7" width="601" height="1.2" fill="rgb(61,61,61)" opacity="0.73"/><rect x="1321" y="37.1" width="506" height="1.1" fill="rgb(50,50,50)" opacity="0.72"/><rect x="1829" y="6.2" width="239" height="0.8" fill="rgb(52,52,52)" opacity="0.52"/><rect x="644" y="17.5" width="738" height="1.1" fill="rgb(46,46,46)" opacity="0.54"/><rect x="1423" y="11.7" width="890" height="1.0" fill="rgb(54,54,54)" opacity="0.37"/><rect x="20" y="22.4" width="582" height="0.7" fill="rgb(52,52,52)" opacity="0.50"/><rect x="93" y="1.6" width="119" height="1.3" fill="rgb(56,56,56)" opacity="0.54"/><rect x="1437" y="2.0" width="758" height="1.2" fill="rgb(49,49,49)" opacity="0.32"/><rect x="30" y="8.0" width="609" height="1.5" fill="rgb(74,74,74)" opacity="0.68"/><rect x="1256" y="3.8" width="795" height="0.8" fill="rgb(80,80,80)" opacity="0.40"/><rect x="1286" y="33.8" width="322" height="1.1" fill="rgb(73,73,73)" opacity="0.51"/><rect x="1327" y="17.0" width="464" height="1.2" fill="rgb(47,47,47)" opacity="0.67"/><rect x="-167" y="38.7" width="435" height="1.1" fill="rgb(56,56,56)" opacity="0.50"/><rect x="1758" y="21.5" width="261" height="1.3" fill="rgb(48,48,48)" opacity="0.69"/><rect x="764" y="18.4" width="377" height="1.2" fill="rgb(70,70,70)" opacity="0.61"/><rect x="743" y="23.8" width="704" height="0.9" fill="rgb(76,76,76)" opacity="0.34"/><rect x="1128" y="15.1" width="477" height="1.2" fill="rgb(79,79,79)" opacity="0.59"/><rect x="1780" y="5.3" width="795" height="1.4" fill="rgb(74,74,74)" opacity="0.45"/><rect x="1645" y="0.5" width="258" height="0.6" fill="rgb(60,60,60)" opacity="0.57"/><rect x="1209" y="32.5" width="758" height="1.0" fill="rgb(44,44,44)" opacity="0.72"/><rect x="1029" y="0.7" width="205" height="0.7" fill="rgb(49,49,49)" opacity="0.69"/><rect x="1142" y="29.6" width="458" height="1.2" fill="rgb(57,57,57)" opacity="0.55"/><rect x="1742" y="32.8" width="221" height="1.4" fill="rgb(59,59,59)" opacity="0.73"/><rect x="1111" y="9.3" width="838" height="1.2" fill="rgb(61,61,61)" opacity="0.65"/><rect x="298" y="21.5" width="270" height="0.8" fill="rgb(43,43,43)" opacity="0.42"/><rect x="1352" y="38.7" width="760" height="1.6" fill="rgb(47,47,47)" opacity="0.50"/><rect x="605" y="19.5" width="272" height="0.6" fill="rgb(54,54,54)" opacity="0.56"/><rect x="1078" y="36.3" width="535" height="0.6" fill="rgb(40,40,40)" opacity="0.65"/><rect x="891" y="16.5" width="181" height="0.9" fill="rgb(72,72,72)" opacity="0.77"/><rect x="-51" y="20.2" width="468" height="0.8" fill="rgb(54,54,54)" opacity="0.31"/><rect x="1176" y="1.7" width="265" height="1.1" fill="rgb(55,55,55)" opacity="0.61"/><rect x="1798" y="26.5" width="182" height="1.1" fill="rgb(75,75,75)" opacity="0.64"/><rect x="1299" y="5.6" width="127" height="1.2" fill="rgb(72,72,72)" opacity="0.54"/><rect x="553" y="38.7" width="372" height="1.2" fill="rgb(46,46,46)" opacity="0.35"/><rect x="570" y="32.2" width="858" height="0.8" fill="rgb(80,80,80)" opacity="0.54"/><rect x="1072" y="11.6" width="220" height="0.9" fill="rgb(42,42,42)" opacity="0.72"/><rect x="1226" y="0.3" width="899" height="1.4" fill="rgb(43,43,43)" opacity="0.34"/><rect x="1092" y="22.2" width="448" height="0.8" fill="rgb(66,66,66)" opacity="0.39"/><rect x="-166" y="25.2" width="708" height="1.2" fill="rgb(62,62,62)" opacity="0.45"/><rect x="-115" y="37.1" width="297" height="0.9" fill="rgb(54,54,54)" opacity="0.75"/><rect x="1066" y="4.5" width="154" height="1.1" fill="rgb(54,54,54)" opacity="0.35"/><rect x="-30" y="28.4" width="782" height="1.2" fill="rgb(77,77,77)" opacity="0.33"/><rect x="919" y="21.2" width="423" height="0.7" fill="rgb(48,48,48)" opacity="0.36"/><rect x="-88" y="30.1" width="867" height="1.1" fill="rgb(51,51,51)" opacity="0.52"/><rect x="1816" y="17.9" width="739" height="0.7" fill="rgb(68,68,68)" opacity="0.60"/><rect x="544" y="5.2" width="118" height="1.6" fill="rgb(51,51,51)" opacity="0.62"/><rect x="331" y="23.4" width="454" height="0.7" fill="rgb(69,69,69)" opacity="0.52"/><rect x="549" y="31.8" width="606" height="1.4" fill="rgb(42,42,42)" opacity="0.61"/><rect x="441" y="1.1" width="772" height="1.0" fill="rgb(75,75,75)" opacity="0.43"/><rect x="789" y="11.1" width="466" height="1.4" fill="rgb(73,73,73)" opacity="0.53"/><rect x="979" y="27.2" width="528" height="0.8" fill="rgb(69,69,69)" opacity="0.77"/><rect x="33" y="14.8" width="648" height="1.3" fill="rgb(55,55,55)" opacity="0.63"/><rect x="48" y="39.3" width="578" height="1.1" fill="rgb(79,79,79)" opacity="0.35"/><rect x="1566" y="30.4" width="462" height="1.5" fill="rgb(63,63,63)" opacity="0.58"/><rect x="295" y="6.8" width="817" height="0.9" fill="rgb(51,51,51)" opacity="0.55"/><rect x="1513" y="40.5" width="426" height="1.1" fill="rgb(60,60,60)" opacity="0.50"/><rect x="1461" y="26.5" width="817" height="1.2" fill="rgb(60,60,60)" opacity="0.50"/><rect x="764" y="1.7" width="191" height="0.9" fill="rgb(63,63,63)" opacity="0.46"/><rect x="1385" y="16.6" width="840" height="1.1" fill="rgb(45,45,45)" opacity="0.54"/><rect x="299" y="25.4" width="808" height="0.5" fill="rgb(78,78,78)" opacity="0.32"/><rect x="1314" y="20.2" width="141" height="0.9" fill="rgb(61,61,61)" opacity="0.63"/><rect x="-189" y="25.1" width="486" height="0.7" fill="rgb(76,76,76)" opacity="0.67"/><rect x="508" y="13.4" width="725" height="1.1" fill="rgb(65,65,65)" opacity="0.66"/><rect x="392" y="19.1" width="503" height="0.9" fill="rgb(76,76,76)" opacity="0.48"/><rect x="1499" y="15.2" width="816" height="1.4" fill="rgb(74,74,74)" opacity="0.66"/><rect x="1042" y="9.2" width="291" height="1.1" fill="rgb(57,57,57)" opacity="0.56"/><rect x="660" y="6.6" width="478" height="1.2" fill="rgb(63,63,63)" opacity="0.64"/><rect x="1087" y="29.8" width="246" height="1.2" fill="rgb(71,71,71)" opacity="0.70"/><rect x="245" y="5.5" width="663" height="1.2" fill="rgb(40,40,40)" opacity="0.53"/><rect x="1371" y="26.2" width="318" height="1.4" fill="rgb(79,79,79)" opacity="0.31"/><rect x="446" y="36.0" width="557" height="0.9" fill="rgb(70,70,70)" opacity="0.34"/><rect x="103" y="19.0" width="804" height="1.5" fill="rgb(69,69,69)" opacity="0.62"/><rect x="1645" y="10.9" width="530" height="1.3" fill="rgb(73,73,73)" opacity="0.45"/><rect x="960" y="37.5" width="548" height="1.0" fill="rgb(44,44,44)" opacity="0.36"/><rect x="784" y="24.1" width="258" height="1.3" fill="rgb(42,42,42)" opacity="0.53"/><rect x="1884" y="2.6" width="783" height="1.2" fill="rgb(62,62,62)" opacity="0.70"/><rect x="1602" y="26.4" width="224" height="0.5" fill="rgb(54,54,54)" opacity="0.36"/><rect x="1443" y="4.2" width="504" height="0.6" fill="rgb(79,79,79)" opacity="0.37"/><rect x="1375" y="17.4" width="348" height="1.3" fill="rgb(41,41,41)" opacity="0.47"/><rect x="-44" y="6.1" width="535" height="0.7" fill="rgb(43,43,43)" opacity="0.67"/><rect x="1235" y="40.2" width="485" height="0.8" fill="rgb(58,58,58)" opacity="0.75"/><rect x="1367" y="6.2" width="106" height="1.5" fill="rgb(45,45,45)" opacity="0.48"/><rect x="130" y="34.7" width="341" height="1.2" fill="rgb(76,76,76)" opacity="0.76"/><rect x="1903" y="5.3" width="283" height="1.4" fill="rgb(54,54,54)" opacity="0.79"/><rect x="1215" y="35.9" width="268" height="1.4" fill="rgb(42,42,42)" opacity="0.47"/><rect x="1185" y="37.9" width="376" height="1.1" fill="rgb(51,51,51)" opacity="0.36"/><rect x="66" y="35.4" width="861" height="1.0" fill="rgb(49,49,49)" opacity="0.68"/><rect x="369" y="9.1" width="532" height="0.6" fill="rgb(47,47,47)" opacity="0.72"/><rect x="176" y="29.5" width="629" height="1.2" fill="rgb(79,79,79)" opacity="0.34"/><rect x="74" y="38.8" width="290" height="1.2" fill="rgb(69,69,69)" opacity="0.53"/><rect x="-99" y="12.9" width="186" height="1.1" fill="rgb(41,41,41)" opacity="0.67"/><rect x="976" y="10.6" width="370" height="0.5" fill="rgb(54,54,54)" opacity="0.38"/><rect x="1344" y="5.4" width="852" height="0.7" fill="rgb(65,65,65)" opacity="0.35"/><rect x="704" y="12.3" width="106" height="0.5" fill="rgb(67,67,67)" opacity="0.35"/><rect x="720" y="1.3" width="254" height="1.4" fill="rgb(64,64,64)" opacity="0.72"/><rect x="1609" y="7.1" width="748" height="0.8" fill="rgb(76,76,76)" opacity="0.56"/><rect x="455" y="33.3" width="433" height="1.5" fill="rgb(70,70,70)" opacity="0.49"/><rect x="634" y="12.1" width="622" height="0.8" fill="rgb(66,66,66)" opacity="0.59"/><rect x="1018" y="21.6" width="357" height="1.1" fill="rgb(44,44,44)" opacity="0.43"/><rect x="1034" y="16.9" width="679" height="1.1" fill="rgb(72,72,72)" opacity="0.56"/><rect x="1847" y="11.4" width="396" height="1.3" fill="rgb(46,46,46)" opacity="0.79"/><rect x="1860" y="17.8" width="811" height="0.9" fill="rgb(72,72,72)" opacity="0.71"/><rect x="453" y="35.5" width="465" height="0.6" fill="rgb(72,72,72)" opacity="0.49"/><rect x="1704" y="7.6" width="542" height="1.1" fill="rgb(67,67,67)" opacity="0.75"/><rect x="441" y="22.4" width="898" height="1.4" fill="rgb(65,65,65)" opacity="0.75"/><rect x="1017" y="38.3" width="760" height="1.5" fill="rgb(72,72,72)" opacity="0.58"/><rect x="136" y="24.8" width="617" height="1.1" fill="rgb(65,65,65)" opacity="0.66"/><rect x="840" y="2.3" width="543" height="1.3" fill="rgb(58,58,58)" opacity="0.75"/><rect x="511" y="1.9" width="458" height="0.9" fill="rgb(53,53,53)" opacity="0.79"/><rect x="1232" y="18.2" width="804" height="1.3" fill="rgb(43,43,43)" opacity="0.31"/><rect x="189" y="26.8" width="652" height="0.6" fill="rgb(70,70,70)" opacity="0.65"/><rect x="1193" y="12.2" width="239" height="1.0" fill="rgb(43,43,43)" opacity="0.72"/><rect x="1032" y="39.7" width="117" height="0.7" fill="rgb(63,63,63)" opacity="0.64"/><rect x="942" y="23.2" width="445" height="1.3" fill="rgb(79,79,79)" opacity="0.46"/><rect x="-37" y="34.4" width="119" height="1.4" fill="rgb(73,73,73)" opacity="0.68"/><rect x="-135" y="36.4" width="123" height="0.6" fill="rgb(56,56,56)" opacity="0.62"/><rect x="542" y="0.8" width="320" height="1.2" fill="rgb(64,64,64)" opacity="0.64"/><rect x="673" y="27.0" width="289" height="1.5" fill="rgb(50,50,50)" opacity="0.66"/><rect x="-130" y="22.3" width="321" height="1.1" fill="rgb(55,55,55)" opacity="0.32"/><rect x="301" y="33.6" width="759" height="1.5" fill="rgb(79,79,79)" opacity="0.30"/><rect x="1036" y="39.2" width="616" height="0.9" fill="rgb(58,58,58)" opacity="0.34"/><rect x="1144" y="26.5" width="556" height="1.6" fill="rgb(55,55,55)" opacity="0.48"/><rect x="245" y="28.4" width="410" height="0.6" fill="rgb(40,40,40)" opacity="0.71"/><rect x="1185" y="23.2" width="334" height="1.6" fill="rgb(59,59,59)" opacity="0.32"/><rect x="-10" y="12.7" width="480" height="1.2" fill="rgb(48,48,48)" opacity="0.48"/><rect x="1122" y="39.5" width="897" height="1.5" fill="rgb(67,67,67)" opacity="0.71"/><rect x="195" y="39.0" width="584" height="1.2" fill="rgb(79,79,79)" opacity="0.33"/><rect x="103" y="3.3" width="124" height="0.7" fill="rgb(64,64,64)" opacity="0.49"/><rect x="718" y="26.7" width="261" height="0.9" fill="rgb(61,61,61)" opacity="0.52"/><rect x="349" y="10.1" width="744" height="1.3" fill="rgb(40,40,40)" opacity="0.71"/><rect x="239" y="0.3" width="145" height="1.5" fill="rgb(68,68,68)" opacity="0.68"/><rect x="1579" y="8.5" width="126" height="0.9" fill="rgb(47,47,47)" opacity="0.51"/><rect x="699" y="38.4" width="511" height="1.3" fill="rgb(41,41,41)" opacity="0.67"/><rect x="1730" y="7.1" width="835" height="0.6" fill="rgb(54,54,54)" opacity="0.66"/><rect x="939" y="21.3" width="314" height="1.3" fill="rgb(51,51,51)" opacity="0.45"/><rect x="-17" y="30.2" width="645" height="1.5" fill="rgb(41,41,41)" opacity="0.63"/><rect x="1499" y="37.1" width="468" height="1.2" fill="rgb(41,41,41)" opacity="0.59"/><rect x="1856" y="34.5" width="754" height="1.2" fill="rgb(61,61,61)" opacity="0.42"/><rect x="1459" y="28.5" width="880" height="0.7" fill="rgb(47,47,47)" opacity="0.40"/><rect x="1590" y="17.3" width="782" height="0.8" fill="rgb(47,47,47)" opacity="0.61"/><rect x="598" y="35.8" width="570" height="0.7" fill="rgb(54,54,54)" opacity="0.55"/><rect x="633" y="4.6" width="797" height="1.0" fill="rgb(43,43,43)" opacity="0.51"/><rect x="1214" y="29.8" width="668" height="1.4" fill="rgb(55,55,55)" opacity="0.50"/><rect x="1631" y="26.4" width="145" height="1.6" fill="rgb(73,73,73)" opacity="0.43"/><rect x="443" y="18.5" width="860" height="1.6" fill="rgb(66,66,66)" opacity="0.68"/><rect x="1551" y="36.1" width="232" height="1.5" fill="rgb(55,55,55)" opacity="0.68"/><rect x="1284" y="11.3" width="412" height="1.1" fill="rgb(67,67,67)" opacity="0.32"/><rect x="1298" y="28.1" width="135" height="0.5" fill="rgb(53,53,53)" opacity="0.75"/><rect x="942" y="29.2" width="768" height="1.0" fill="rgb(50,50,50)" opacity="0.47"/><rect x="718" y="3.4" width="542" height="0.6" fill="rgb(50,50,50)" opacity="0.44"/><rect x="242" y="0.2" width="313" height="1.5" fill="rgb(54,54,54)" opacity="0.41"/><rect x="910" y="19.8" width="493" height="0.5" fill="rgb(41,41,41)" opacity="0.50"/><rect x="1178" y="21.7" width="524" height="0.6" fill="rgb(67,67,67)" opacity="0.53"/><rect x="162" y="34.0" width="239" height="1.5" fill="rgb(79,79,79)" opacity="0.66"/><rect x="895" y="34.9" width="122" height="1.2" fill="rgb(43,43,43)" opacity="0.60"/><rect x="641" y="25.7" width="881" height="1.1" fill="rgb(78,78,78)" opacity="0.36"/><rect x="98" y="23.3" width="832" height="1.3" fill="rgb(61,61,61)" opacity="0.33"/><rect x="250" y="33.1" width="576" height="0.9" fill="rgb(52,52,52)" opacity="0.31"/><rect x="644" y="28.0" width="220" height="1.2" fill="rgb(43,43,43)" opacity="0.51"/><rect x="924" y="13.2" width="297" height="1.4" fill="rgb(56,56,56)" opacity="0.43"/><rect x="1734" y="20.4" width="322" height="0.9" fill="rgb(53,53,53)" opacity="0.30"/><rect x="1389" y="34.8" width="691" height="0.9" fill="rgb(46,46,46)" opacity="0.51"/><rect x="1649" y="25.1" width="325" height="0.8" fill="rgb(40,40,40)" opacity="0.31"/></svg></div>
<!-- ===== TITLE BAR ===== -->
<svg class="a" style="left:0;top:0" width="420" height="62">
  <g transform="translate(26,10.5) skewX(-17) scale(0.94,1)">
    <rect x="1" y="1" width="82" height="21.5" rx="3" fill="#0a0a0a" stroke="#f26f21" stroke-width="2.4"/>
    <path fill="#f26f21" fill-rule="evenodd" d="M5 4 H11 V19 H5 Z M14 4 H30 Q34 4 34 8 V15 Q34 19 30 19 H14 Z M19 8 V15 H29 V8 Z M37 4 H57 V13 H42 V15 H57 V19 H37 Z M42 8 V10 H52 V8 Z M60 4 H80 V19 H60 V10.5 H75 V8 H60 Z M65 13 V15 H75 V13 Z"/>
  </g>
  <text x="107" y="30.5" font-family="Liberation Sans" font-weight="bold" font-style="italic" font-size="25" fill="#fff" textLength="89" lengthAdjust="spacingAndGlyphs">StatiCa</text>
  <circle cx="201.5" cy="16" r="3.3" fill="none" stroke="#ddd" stroke-width="1"/>
  <text x="229" y="29" font-family="Liberation Sans" font-weight="bold" font-style="italic" font-size="20" fill="#fff" textLength="138" lengthAdjust="spacingAndGlyphs">CONNECTION</text>
  <text x="19" y="54" font-family="Liberation Sans" font-weight="bold" font-style="italic" font-size="11.5" fill="#fff" textLength="171" lengthAdjust="spacingAndGlyphs">Calculate yesterday's estimates</text>
</svg>
<div class="a" style="left:987px;top:13.5px;font-size:18px;color:#fff;">untitled</div>
<div class="wbtn" style="left:1822px;"><div style="position:absolute;left:5px;top:13px;width:11px;height:2.5px;background:#111"></div></div>
<div class="wbtn" style="left:1855px;"><div style="position:absolute;left:5px;top:5px;width:7px;height:7px;border:2px solid #111"></div></div>
<div class="wbtn" style="left:1888px;background:#e2671f;"><svg width="21" height="20" style="position:absolute;left:0;top:0"><path d="M6 5 L15 14 M15 5 L6 14" stroke="#111" stroke-width="2.6"/></svg></div>

<!-- tabs -->
<div class="tab" style="left:270px;width:125px;"></div>
<div class="tab" style="left:400px;width:123px;"></div>
<div class="tab" style="left:529px;width:125px;background:#f26f21;"></div>
<div class="tab" style="left:660px;width:123px;"></div>
<div class="tab" style="left:787px;width:125px;"></div>
<div class="tabt" style="left:307px;top:49.8px;">Project</div>
<div class="tabt" style="left:439px;top:49.8px;">Design</div>
<div class="tabt" style="left:571px;top:49.8px;">Check</div>
<div class="tabt" style="left:697px;top:49.8px;">Report</div>
<div class="tabt" style="left:817px;top:49.8px;">Materials</div>
<div id="ostripe"></div>
<div class="redbox" style="left:523px;top:36px;width:137px;height:49px;"></div>

<!-- ===== RIBBON ===== -->
<div class="a" style="left:8px;top:86px;width:141px;height:38px;background:#f26f21;"></div>
<div class="a" style="left:16px;top:98.2px;font-size:15px;color:#fff;">20</div>
<svg class="a" style="left:135px;top:100px" width="10" height="6"><path d="M1 1 L9 1 L5 5 Z" fill="#fff"/></svg>
<div class="rt" style="left:16px;top:133px;color:#f26f21;font-weight:bold;letter-spacing:-0.8px;">EPS</div>
<div class="rt" style="left:56px;top:133px;color:#1a1a1a;">ST</div>
<div class="rt" style="left:88px;top:133px;color:#1a1a1a;">CD</div>
<div class="rt" style="left:124px;top:133px;color:#1a1a1a;">DR</div>
<!-- New icon -->
<svg class="a" style="left:155px;top:88px" width="45" height="44">
  <rect x="9.3" y="4.8" width="27.6" height="35.4" rx="4.5" fill="none" stroke="#6a6a6a" stroke-width="2.8"/>
  <path d="M15 21 L23.5 27 L32 21 L32 24.5 L23.5 30.5 L15 24.5 Z M15 28.5 H32 V32.5 H15 Z" fill="#6a6a6a"/>
  <path d="M9.5 2 H15.5 V8.5 H21.7 V14.5 H15.5 V20.7 H9.5 V14.5 H3 V8.5 H9.5 Z" fill="#5b9be6"/>
</svg>
<div class="rt" style="left:163px;top:133px;">New</div>
<!-- Copy icon -->
<svg class="a" style="left:207px;top:88px" width="40" height="44">
  <path d="M12 4 H24 Q27 4 27 7 V12 M4 30 V14 L12 4 V14 H4" fill="none" stroke="#6a6a6a" stroke-width="2.4"/>
  <path d="M4 14 L12 4 L12 14 Z" fill="#6a6a6a"/>
  <path d="M4 30 Q4 33 7 33 H12" fill="none" stroke="#6a6a6a" stroke-width="2.4"/>
  <path d="M21 14 H30 Q33 14 33 17 V37 Q33 40 30 40 H17 Q14 40 14 37 V21 Z" fill="#fff" stroke="#6a6a6a" stroke-width="2.4"/>
  <path d="M14 21 L21 14 L21 21 Z" fill="#6a6a6a"/>
  <path d="M18 29 L23 33 L30 29 V31 L23 35 L18 31 Z M18 34 H30 V36 H18 Z" fill="#6a6a6a"/>
</svg>
<div class="rt" style="left:209px;top:133px;">Copy</div>
<div class="glab" style="left:84px;top:175.6px;color:#f9b48a;font-weight:bold;font-size:15px;">Project items</div>
<div class="a" style="left:255px;top:81px;width:6px;height:115px;background:#c8c8c8;"></div>

<!-- Data group -->
<svg class="a" style="left:270px;top:92px" width="24" height="76">
  <path d="M4 12 L4 4 L12 10 Z" fill="#111"/>
  <path d="M7 9 Q14 3 20 9 L20 14" fill="none" stroke="#111" stroke-width="3"/>
  <path d="M20 38 L20 30 L12 36 Z" fill="#bdbdbd"/>
  <path d="M17 35 Q10 29 4 35 L4 39" fill="none" stroke="#bdbdbd" stroke-width="3"/>
  <rect x="3" y="56" width="18" height="18" rx="1.5" fill="none" stroke="#6a6a6a" stroke-width="1.6"/>
  <rect x="7" y="56" width="10" height="6" fill="none" stroke="#6a6a6a" stroke-width="1.5"/>
  <rect x="6" y="66" width="12" height="8" fill="none" stroke="#6a6a6a" stroke-width="1.5"/>
</svg>
<div class="rt" style="left:297px;top:94px;">Undo</div>
<div class="rt" style="left:297px;top:122px;color:#bdbdbd;">Redo</div>
<div class="rt" style="left:297px;top:150px;">Save</div>
<div class="glab" style="left:288px;">Data</div>
<div class="sep" style="left:343px;"></div>

<!-- Labels group -->
<div class="hl" style="left:352px;top:86px;width:70px;height:86px;"></div>
<svg class="a" style="left:362px;top:92px" width="50" height="36">
  <rect x="9" y="5" width="29" height="6" fill="#4a4a4a"/><rect x="9" y="8" width="29" height="1" fill="#777"/>
  <rect x="9" y="24" width="29" height="6" fill="#4a4a4a"/><rect x="9" y="27" width="29" height="1" fill="#777"/>
  <path d="M9 11 L11 15 L6 17 L10 20 L9 24 M38 11 L40 15 L35 17 L45 17 L38 20 L38 24" fill="none" stroke="#4a4a4a" stroke-width="1.8"/>
</svg>
<div class="rt" style="left:356px;top:133.2px;">Members</div>
<svg class="a" style="left:432px;top:92px" width="28" height="36">
  <rect x="4" y="2.5" width="20" height="30" rx="2" fill="none" stroke="#555" stroke-width="2"/>
  <circle cx="9.5" cy="8" r="2" fill="none" stroke="#555" stroke-width="1.4"/><circle cx="18.5" cy="8" r="2" fill="none" stroke="#555" stroke-width="1.4"/>
  <circle cx="9.5" cy="26" r="2" fill="none" stroke="#555" stroke-width="1.4"/><circle cx="18.5" cy="26" r="2" fill="none" stroke="#555" stroke-width="1.4"/>
</svg>
<div class="rt" style="left:427px;top:133.2px;">Plates</div>
<svg class="a" style="left:472px;top:90px" width="44" height="42">
  <path d="M22 22 V5 M22 22 H38 M22 22 L6 37" stroke="#707070" stroke-width="2.4" fill="none"/>
  <path d="M17 8 L22 1 L27 8 Z M36 17 L43 22 L36 27 Z M3 32 L2 40 L10 38 Z" fill="#707070"/>
</svg>
<div class="rt" style="left:483px;top:133.2px;">LCS</div>
<div class="glab" style="left:415px;">Labels</div>
<div class="sep" style="left:523px;"></div>

<!-- Pictures group -->
<svg class="a" style="left:534px;top:88px" width="44" height="44">
  <rect x="9" y="2.5" width="31" height="31" fill="#ececec" stroke="#b8bcc8" stroke-width="1.2"/>
  <rect x="2.5" y="8.5" width="30" height="33" fill="#ececec" stroke="#b8bcc8" stroke-width="1.2"/>
  <path d="M5 32 L13 20 L16 24 L23 14 L30 32 Z" fill="none" stroke="#f0905a" stroke-width="1.3"/>
  <path d="M8 3 H13 V8 H19 V13 H13 V19 H8 V13 H2 V8 H8 Z" fill="#6a9bd8" opacity="0.9"/>
</svg>
<div class="rt" style="left:542px;top:133.2px;">New</div>
<svg class="a" style="left:585px;top:88px" width="44" height="44">
  <rect x="9" y="2.5" width="31" height="31" fill="#ececec" stroke="#b8bcc8" stroke-width="1.2"/>
  <rect x="2.5" y="8.5" width="30" height="33" fill="#ececec" stroke="#b8bcc8" stroke-width="1.2"/>
  <path d="M5 32 L13 20 L16 24 L23 14 L30 32 Z" fill="none" stroke="#f0905a" stroke-width="1.3"/>
  <circle cx="10" cy="15" r="2.2" fill="none" stroke="#f0905a" stroke-width="1.2"/>
</svg>
<div class="rt" style="left:584px;top:133.2px;">Gallery</div>
<div class="glab" style="left:557px;">Pictures</div>
<div class="sep" style="left:639px;"></div>

<!-- CBFEM group -->
<svg class="a" style="left:650px;top:90px" width="44" height="40">
  <path d="M9 4 L13 8 L11 13 L6 14 L2.5 10 Q1 17 7 20 Q11 21.5 14 20 L32 37 Q35 39.5 37.5 37 Q40 34.5 37 31.5 L20 14 Q22 9 19 5 Q15 1 9 4 Z" fill="none" stroke="#6a6a6a" stroke-width="2.4" stroke-linejoin="round"/>
</svg>
<div class="rt" style="left:654px;top:133.2px;">Code</div>
<div class="rt" style="left:653px;top:148.9px;">setup</div>
<svg class="a" style="left:704px;top:90px" width="42" height="40">
  <path d="M5 2 V37 M36 2 V37 M5 6 H36 M5 17 H36 M5 28 H36 M1 37 H10 M31 37 H40" stroke="#111" stroke-width="2"/>
  <circle cx="12" cy="6" r="2.3" fill="#111"/><circle cx="19" cy="6" r="2.3" fill="#f07030"/><circle cx="26" cy="6" r="2.3" fill="#111"/>
  <circle cx="18" cy="17" r="2.3" fill="#111"/><circle cx="26" cy="17" r="2.3" fill="#f07030"/>
  <circle cx="13" cy="28" r="2.3" fill="#f07030"/><circle cx="20" cy="28" r="2.3" fill="#111"/><circle cx="27" cy="28" r="2.3" fill="#f07030"/>
</svg>
<div class="rt" style="left:695px;top:133.2px;">Calculate</div>
<svg class="a" style="left:720px;top:155px" width="12" height="8"><path d="M1 1 H10 L5.5 6 Z" fill="#333"/></svg>
<svg class="a" style="left:762px;top:88px" width="44" height="44">
  <path d="M3 8 L8 4 L8 37 L3 38 Z" fill="#b81818"/>
  <path d="M8 5 L11 7 L11 36 L8 37 Z" fill="#4a0c0c"/>
  <path d="M11 7 L16 4 L16 33 L11 37 Z" fill="#d42020"/>
  <path d="M14.5 10 L22 6 L22 36 L14.5 41 Z" fill="#5e4018" stroke="#f0a020" stroke-width="0.9"/>
  <path d="M16.5 14.5 L38.4 16.7 L39 24.7 L25.3 28.4 L16.5 25.4 Z" fill="#80c030"/>
  <path d="M16.5 24 L39 23 L41 25 L25.3 29 L16.5 26.5 Z" fill="#a8f040"/>
  <path d="M15.8 10.9 L22.4 7.2 L39.1 12.3 L32.6 15.2 Z" fill="#9c9c9c"/>
  <path d="M16 14.5 L32.6 15.2 L39.1 12.3 L39.1 14 L32.6 17 L16 16 Z" fill="#6c6c6c"/>
</svg>
<div class="rt" style="left:760px;top:133.2px;">Overall</div>
<div class="rt" style="left:765px;top:148.9px;">check</div>
<svg class="a" style="left:812px;top:88px" width="46" height="44">
  <path d="M5 3 V37 H41" stroke="#222" stroke-width="1.6" fill="none"/>
  <path d="M2 8 L5 2 L8 8 Z M38 34 L43 37 L38 40 Z" fill="#222"/>
  <path d="M7 36 L16 17 L29 17 L22 36 Z" fill="#00c860"/>
  <path d="M22 36 L29 17 L39 17 L39 36 Z" fill="#ff0010"/>
  <path d="M6 17 H16" stroke="#bbb" stroke-width="1" stroke-dasharray="2 1"/>
</svg>
<div class="rt" style="left:816px;top:133.2px;">Strain</div>
<div class="rt" style="left:817px;top:148.9px;">check</div>
<svg class="a" style="left:870px;top:88px" width="44" height="44" opacity="0.55">
  <path d="M2 4 L14 1 L14 42 L2 42 Z" fill="#c8c8d0" stroke="#999" stroke-width="0.6"/>
  <path d="M14 1 L20 3 L20 42 L14 42 Z" fill="#a8a8b0"/>
  <path d="M20 10 L40 8 L41 40 L20 42 Z" fill="#b8b8c0"/>
  <path d="M2 10 H20 M2 16 H20 M2 22 H20 M2 28 H20 M2 34 H20 M20 16 H41 M20 22 H41 M20 28 H41 M20 34 H41 M6 2 V42 M10 2 V42 M25 9 V42 M30 9 V42 M35 9 V42" stroke="#888" stroke-width="0.7"/>
</svg>
<div class="rt" style="left:864px;top:133.2px;color:#b8b8b8;">Buckling</div>
<div class="rt" style="left:872px;top:148.9px;color:#b8b8b8;">shape</div>
<div class="a" style="left:923px;top:86px;width:112px;height:32px;background:#e8e8e8;border:1px solid #c4c4c4;box-sizing:border-box;"></div>
<div class="rt" style="left:929px;top:95.1px;color:#b0b0b0;">DStIS2</div>
<svg class="a" style="left:1018px;top:97px" width="12" height="8"><path d="M1 1 H11 L6 6 Z" fill="#b0b0b0"/></svg>
<div class="a" style="left:923px;top:118px;width:112px;height:32px;background:#fff;border:1px solid #c4c4c4;box-sizing:border-box;"></div>
<div class="rt" style="left:929px;top:127.1px;color:#222;">For extreme</div>
<svg class="a" style="left:1018px;top:129px" width="12" height="8"><path d="M1 1 H11 L6 6 Z" fill="#333"/></svg>
<div class="glab" style="left:818px;">CBFEM</div>
<div class="sep" style="left:1040px;"></div>

<!-- FE analysis group -->
<div class="hl" style="left:1050px;top:88px;width:74px;height:81px;"></div>
<div class="redbox" style="left:1046px;top:84px;width:82px;height:89px;"></div>
<svg class="a" style="left:1068px;top:88px" width="40" height="42">
  <path d="M2 9 L5 3 L8 9 Z" fill="#f08850"/><path d="M5 6 V38" stroke="#f08850" stroke-width="1.4"/>
  <path d="M5 38 H35" stroke="#333" stroke-width="1.6"/><path d="M33 35 L38 38 L33 41 Z" fill="#333"/>
  <path d="M5 38 L11.3 19 H34" stroke="#444" stroke-width="1.8" fill="none"/>
  <path d="M5 19 H11" stroke="#999" stroke-width="1" stroke-dasharray="2 1"/>
</svg>
<div class="rt" style="left:1053px;top:133.2px;">Equivalent</div>
<div class="rt" style="left:1069px;top:148.9px;">stress</div>
<svg class="a" style="left:1129px;top:88px" width="44" height="42">
  <path d="M2 9 L5 3 L8 9 Z" fill="#333"/><path d="M5 6 V38" stroke="#333" stroke-width="1.4"/>
  <path d="M5 38 H38" stroke="#f08850" stroke-width="1.6"/><path d="M36 35 L41 38 L36 41 Z" fill="#f08850"/>
  <path d="M5 38 L12.6 19 H36" stroke="#555" stroke-width="1.8" fill="none"/>
  <path d="M5 19 H12" stroke="#aaa" stroke-width="1" stroke-dasharray="2 1"/>
</svg>
<div class="rt" style="left:1130px;top:133.2px;">Plastic</div>
<div class="rt" style="left:1131px;top:148.9px;">strain</div>
<svg class="a" style="left:1188px;top:91px" width="38" height="38">
  <defs>
    <radialGradient id="hg1" cx="0.5" cy="0.5" r="0.5"><stop offset="0.35" stop-color="#ff2010"/><stop offset="0.55" stop-color="#ffe000"/><stop offset="0.75" stop-color="#20e070"/><stop offset="0.9" stop-color="#20a0ff"/><stop offset="1" stop-color="#3020c0"/></radialGradient>
  </defs>
  <rect x="0" y="0" width="38" height="38" fill="#3020b0"/>
  <rect x="1" y="12" width="36" height="14" fill="#b8bcc8"/>
  <ellipse cx="19" cy="6.5" rx="19" ry="7.5" fill="url(#hg1)"/>
  <ellipse cx="19" cy="31.5" rx="19" ry="7.5" fill="url(#hg1)"/>
  <rect x="16.5" y="10" width="5" height="18" fill="#ffe000"/><rect x="17.8" y="10" width="2.4" height="18" fill="#c8e020"/>
</svg>
<div class="rt" style="left:1180px;top:133.2px;">Stress in</div>
<div class="rt" style="left:1179px;top:148.9px;">contacts</div>
<svg class="a" style="left:1246px;top:88px" width="32" height="42">
  <path d="M3 30 L16 24 L29 30 L16 40 Z" fill="#e87a3a"/>
  <path d="M8 6 L13 2 L13 33 L8 36 Z" fill="#9090b0"/><path d="M13 2 L16 4 L16 34 L13 33 Z" fill="#c0c0d8"/>
  <path d="M16 10 L22 6 L22 36 L16 38 Z" fill="#a0a0c0"/>
  <path d="M19 33 V22 M25 30 V18" stroke="#222" stroke-width="1.2"/><path d="M17 24 L19 20 L21 24 Z M23 20 L25 16 L27 20 Z" fill="#222"/>
</svg>
<div class="rt" style="left:1250px;top:133.2px;">Bolt</div>
<div class="rt" style="left:1243px;top:148.9px;">forces</div>
<div class="hl" style="left:1287px;top:86px;width:123px;height:85px;"></div>
<div class="redbox" style="left:1283px;top:82px;width:131px;height:93px;"></div>
<svg width="0" height="0" style="position:absolute"><defs><pattern id="mp" width="3.6" height="3.6" patternUnits="userSpaceOnUse"><path d="M0 0 H3.6 M0 0 V3.6" stroke="#3c3e64" stroke-width="0.7" fill="none"/></pattern></defs></svg><svg class="a" style="left:1290px;top:88px" width="42" height="44"><path d="M1 5 L10 2 L10 42 L1 42 Z" fill="#6c6e9c"/><path d="M10 2 L17 4 L17 42 L10 42 Z" fill="#c4c6d6"/><path d="M17 5 L30 3 L30 42 L17 42 Z" fill="#6c6e9c"/><path d="M24 12 L41 15 L41 36 L24 34 Z" fill="#b4b6ca"/><path d="M20 8 L41 12 L41 17 L20 13 Z" fill="#6c6e9c"/><path d="M20 31 L41 34 L41 39 L20 36 Z" fill="#6c6e9c"/><path d="M1 5 L10 2 L10 42 L1 42 Z" fill="url(#mp)"/><path d="M10 2 L17 4 L17 42 L10 42 Z" fill="url(#mp)"/><path d="M17 5 L30 3 L30 42 L17 42 Z" fill="url(#mp)"/><path d="M24 12 L41 15 L41 36 L24 34 Z" fill="url(#mp)"/><path d="M20 8 L41 12 L41 17 L20 13 Z" fill="url(#mp)"/><path d="M20 31 L41 34 L41 39 L20 36 Z" fill="url(#mp)"/></svg>
<div class="rt" style="left:1293px;top:133.2px;">Mesh</div>
<svg class="a" style="left:1352px;top:88px" width="42" height="44"><path d="M1 5 L10 2 L10 42 L1 42 Z" fill="#6c6e9c"/><path d="M10 2 L17 4 L17 42 L10 42 Z" fill="#c4c6d6"/><path d="M17 5 L30 3 L30 42 L17 42 Z" fill="#6c6e9c"/><path d="M24 13 L41 16 L41 36 L24 34 Z" fill="#b4b6ca"/><path d="M20 9 L41 14 L41 19 L20 14 Z" fill="#6c6e9c"/><path d="M20 31 L41 35 L41 40 L20 36 Z" fill="#6c6e9c"/><path d="M1 5 L10 2 L10 42 L1 42 Z" fill="url(#mp)"/><path d="M10 2 L17 4 L17 42 L10 42 Z" fill="url(#mp)"/><path d="M17 5 L30 3 L30 42 L17 42 Z" fill="url(#mp)"/><path d="M24 13 L41 16 L41 36 L24 34 Z" fill="url(#mp)"/><path d="M20 9 L41 14 L41 19 L20 14 Z" fill="url(#mp)"/><path d="M20 31 L41 35 L41 40 L20 36 Z" fill="url(#mp)"/></svg>
<div class="rt" style="left:1339px;top:133.2px;">Deformed</div>
<div class="a" style="left:1415px;top:86px;width:100px;height:32px;background:#fff;border:1px solid #bdbdbd;box-sizing:border-box;"></div>
<div class="rt" style="left:1451px;top:95.1px;color:#222;">10.00</div>
<svg class="a" style="left:1498px;top:89px" width="13" height="26"><path d="M2 8 H11 L6.5 3 Z M2 17 H11 L6.5 22 Z" fill="#333"/></svg>
<div class="glab" style="left:1246px;">FE analysis</div>
<div class="sep" style="left:1520px;"></div>

<!-- ===== VIEW TOOLBAR ===== -->
<div class="a" style="left:0;top:199px;width:1445px;height:32px;background:#9b9b9b;"></div>
<svg class="a" style="left:0;top:199px" width="330" height="32">
  <g fill="none" stroke="#fff" stroke-width="2.2">
    <path d="M26 29 V16 L36 7 L46 16 V29 H40 V21 H32 V29 Z M24 18 L36 7 L48 18"/>
    <rect x="71" y="7" width="15" height="14"/>
    <circle cx="86" cy="24" r="5" fill="#9b9b9b"/><path d="M90 27 L94 31"/><path d="M86 21 V24 H83" stroke-width="1.3"/>
    <circle cx="125" cy="15" r="7.5" stroke-width="2.6"/><path d="M130 21 L138 29" stroke-width="3"/>
    <path d="M173 7 V30 M161 18.5 H185" stroke-width="2.4"/>
    <path d="M227 12 A9 9 0 1 0 228 21" stroke-width="2.4"/>
    <path d="M252 8 L258 14 M271 8 L265 14 M252 29 L258 23 M271 29 L265 23" stroke-width="1.8"/>
  </g>
  <g fill="#fff">
    <path d="M168 11 L173 5 L178 11 Z M168 26 L173 32 L178 26 Z M165 13.5 L159 18.5 L165 23.5 Z M181 13.5 L187 18.5 L181 23.5 Z"/>
    <path d="M222 8 L230 8 L229 16 Z"/>
    <path d="M251 7 H256 L251 12 Z M272 7 H267 L272 12 Z M251 30 H256 L251 25 Z M272 30 H267 L272 25 Z"/>
    <path d="M295 17 L310 11 L315 14 L315 21 L301 28 L295 26 Z"/>
  </g>
  <path d="M295 17 L301 19 L315 14 M301 19 V28" stroke="#9b9b9b" stroke-width="0.8" fill="none"/>
</svg>
<div class="rt" style="left:1205px;top:210px;font-size:14.5px;color:#f4f4f4;">Solid</div>
<div class="rt" style="left:1255px;top:210px;font-size:14.5px;color:#f4f4f4;">Transparent</div>
<div class="rt" style="left:1354px;top:210px;font-size:14.5px;color:#f4f4f4;">Wireframe</div>

<!-- splitter -->
<div class="a" style="left:1445px;top:199px;width:7px;height:790px;background:#c8c8c8;"></div>

<!-- ===== RIGHT PANEL ===== -->
<div class="a" style="left:1452px;top:200px;width:468px;height:33px;background:#f26f21;"></div>
<div class="a" style="left:1458px;top:205px;width:85px;height:28px;background:#f0f0f0;"></div>
<div class="rt" style="left:1474px;top:212.6px;font-size:14.5px;color:#f26f21;">Analysis</div>
<div class="rt" style="left:1559px;top:212.6px;font-size:14.5px;color:#fde8d8;">Plates</div>
<div class="rt" style="left:1630px;top:212.6px;font-size:14.5px;color:#fde8d8;">Bolts</div>
<div class="a" style="left:1919px;top:233px;width:1px;height:452px;background:#a0a0a0;"></div>
<div class="a" style="left:1452px;top:684px;width:468px;height:2px;background:#a0a0a0;"></div>
<div class="a" style="left:1452px;top:686px;width:468px;height:5px;background:#cacaca;"></div>
<div class="rt" style="left:1472px;top:253.6px;font-weight:bold;color:#f26f21;">Status of FE analysis</div>
<!-- table -->
<div class="a" style="left:1466px;top:275px;width:252px;height:78px;background:#dedede;border:2px solid #a8a8a8;box-sizing:border-box;"></div>
<div class="a" style="left:1468px;top:277px;width:247px;height:39px;background:#f0f0f0;"></div>
<div class="a" style="left:1468px;top:316px;width:247px;height:1px;background:#a8a8a8;"></div>
<div class="a" style="left:1502px;top:277px;width:1px;height:74px;background:#a8a8a8;"></div>
<div class="a" style="left:1561px;top:277px;width:1px;height:74px;background:#a8a8a8;"></div>
<div class="a" style="left:1617px;top:277px;width:1px;height:74px;background:#a8a8a8;"></div>
<div class="a" style="left:1714px;top:277px;width:1px;height:74px;background:#a8a8a8;"></div>
<div class="rt" style="left:1508px;top:289.7px;font-size:14px;font-weight:bold;color:#333;">Status</div>
<div class="rt" style="left:1567px;top:289.7px;font-size:14px;font-weight:bold;color:#333;">Loads</div>
<div class="rt" style="left:1623px;top:289.7px;font-size:14.5px;font-weight:bold;color:#333;">Applied [%]</div>
<svg class="a" style="left:1478px;top:327px" width="14" height="18"><path d="M3 2 L10 9 L3 16" fill="none" stroke="#333" stroke-width="1.8"/></svg>
<svg class="a" style="left:1520px;top:324px" width="24" height="24">
  <circle cx="12" cy="12" r="10.5" fill="#4cc040"/><circle cx="12" cy="11" r="8.5" fill="#5ccf4a"/>
  <path d="M6.5 12 L10.5 16 L17.5 8.5" fill="none" stroke="#fff" stroke-width="2.6"/>
</svg>
<div class="rt" style="left:1567px;top:329px;font-size:14.5px;color:#444;">DStIS2</div>
<div class="rt" style="left:1624px;top:329px;font-size:14.5px;color:#333;">100.0</div>
<!-- expand button -->
<div class="a" style="left:1456px;top:695px;width:30px;height:30px;background:linear-gradient(#f4f4f4,#d4d4d4);border:1px solid #a0a0a0;box-sizing:border-box;border-radius:2px;"></div>
<svg class="a" style="left:1456px;top:695px" width="30" height="30">
  <g stroke="#555" stroke-width="1.3" fill="none"><path d="M8 8 L13 13 M22 8 L17 13 M8 22 L13 17 M22 22 L17 17"/></g>
  <g fill="#555"><path d="M7 7 H11 L7 11 Z M23 7 H19 L23 11 Z M7 23 H11 L7 19 Z M23 23 H19 L23 19 Z"/></g>
</svg>

<!-- ===== RESULTS (left overlay) ===== -->
<div class="res" style="left:13px;top:259px;letter-spacing:-0.4px;">Analysis</div>
<div class="res" style="left:13px;top:285.1px;">Plates</div>
<div class="res" style="left:13px;top:311.5px;">Bolts</div>
<div class="res" style="left:13px;top:337.3px;">Buckling</div>
<svg class="a" style="left:80px;top:256px" width="22" height="72">
  <g fill="none" stroke="#6cbf6c" stroke-width="4.2" stroke-linejoin="miter">
    <path d="M3 12 L8 18 L19 3"/><path d="M3 38 L8 44 L19 29"/><path d="M3 64 L8 70 L19 55"/>
  </g>
</svg>
<div class="res" style="left:114.7px;top:259px;letter-spacing:-0.5px;">100.0%</div>
<div class="res" style="left:114.7px;top:285.1px;letter-spacing:-0.4px;">1.9 &lt; 5.0%</div>
<div class="res" style="left:114.7px;top:311.5px;letter-spacing:-0.3px;"> 89.3 &lt; 100%</div>
<div class="res" style="left:114.7px;top:337.3px;">Not calculated</div>

<!-- ===== STATUS BAR ===== -->
<div class="sb" style="left:30px;color:#9c9c9c;">Design code:</div>
<div class="sb" style="left:125px;color:#fff;">AISC - ASD</div>
<div class="sb" style="left:227px;color:#9c9c9c;">Analysis:</div>
<div class="sb" style="left:295px;color:#fff;">Stress, strain</div>
<div class="sb" style="left:410px;color:#9c9c9c;">Load effects:</div>
<div class="sb" style="left:506px;color:#fff;">In equilibrium</div>
<div class="sb" style="left:629px;color:#9c9c9c;">Units:</div>
<div class="sb" style="left:680px;color:#fff;">in</div>
<div class="a" style="left:1766px;top:1003.3px;font-size:15px;color:#fff;"><span style="color:#f26f21">www.</span>ideastatica<span style="color:#f26f21">.com</span></div>

<svg class="a" style="left:0;top:0" width="1445" height="989"><defs><clipPath id="c1"><polygon points="821.8,607.6 875.5,578.7 916.0,590.5 821.8,652.0"/></clipPath><clipPath id="c2"><polygon points="821.8,494.8 882.0,460.8 874.0,579.0 863.7,585.3 821.8,607.6"/></clipPath><clipPath id="c3"><polygon points="821.8,420.8 842.7,406.1 927.8,427.8 882.0,460.8 821.8,494.8"/></clipPath><clipPath id="c4"><polygon points="622.0,334.0 670.0,293.0 670.0,840.0 622.0,882.0"/></clipPath><clipPath id="c5"><polygon points="646.6,314.0 798.0,357.0 798.0,892.0 646.4,862.0"/></clipPath><clipPath id="c6"><polygon points="540.0,715.0 606.0,704.0 630.0,679.0 752.3,552.2 772.0,560.0 772.0,690.0 696.0,698.0 564.0,845.0 549.0,852.0"/></clipPath><clipPath id="c7"><polygon points="513.0,845.0 538.0,817.0 560.0,800.0 564.0,845.0 549.0,852.0"/></clipPath><clipPath id="c8"><polygon points="513.0,845.0 549.0,852.0 564.0,845.0 696.0,698.0 721.0,679.0 761.6,694.6 594.0,870.0"/></clipPath><clipPath id="c9"><polygon points="695.5,613.4 752.3,552.2 771.5,560.0 771.5,690.0 724.0,678.0 696.0,702.0"/></clipPath><clipPath id="c10"><polygon points="724.0,678.0 733.0,672.0 771.5,682.0 771.5,690.0 762.7,688.5"/></clipPath><clipPath id="c11"><polygon points="501.0,704.0 671.4,528.8 752.3,552.2 630.0,679.0 606.0,704.0 541.7,716.0"/></clipPath><clipPath id="c12"><polygon points="773.0,378.0 821.3,337.0 821.5,885.0 773.4,925.0"/></clipPath></defs><polygon points="821.8,607.6 875.5,578.7 916.0,590.5 821.8,652.0" fill="#46098e"/><g clip-path="url(#c1)"><path d="M808.5 485.4L989.5 537.9M805.2 496.9L986.1 549.4M801.8 508.4L982.8 560.9M798.5 520.0L979.4 572.4M795.1 531.5L976.1 584.0M791.8 543.0L972.7 595.5M788.5 554.5L969.4 607.0M785.1 566.1L966.1 618.5M781.8 577.6L962.7 630.1M778.4 589.1L959.4 641.6M775.1 600.6L956.0 653.1M771.7 612.2L952.7 664.6M768.4 623.7L949.3 676.2M765.1 635.2L946.0 687.7M761.7 646.7L942.7 699.2M758.4 658.3L939.3 710.7M755.0 669.8L936.0 722.3M751.7 681.3L932.6 733.8M748.3 692.8L929.3 745.3M729.7 575.4L886.9 471.7M740.2 591.3L897.4 487.5M750.6 607.1L907.9 503.4M761.1 623.0L918.3 519.2M771.6 638.9L928.8 535.1M782.0 654.7L939.3 550.9M792.5 670.6L949.7 566.8M802.9 686.4L960.2 582.7M813.4 702.3L970.7 598.5M823.9 718.2L981.1 614.4M834.3 734.0L991.6 630.2M844.8 749.9L1002.1 646.1M855.3 765.7L1012.5 661.9" stroke="#0a0414" stroke-width="1" fill="none"/></g><polygon points="821.8,607.6 875.5,578.7 916.0,590.5 821.8,652.0" fill="none" stroke="#0a0414" stroke-width="1"/><polygon points="821.8,494.8 882.0,460.8 874.0,579.0 863.7,585.3 821.8,607.6" fill="#3410bc"/><g clip-path="url(#c2)"><polygon points="858,480 882,460 874,579 856,590" fill="#46098e"/><polygon points="821,560 850,560 864,586 821,608" fill="#40099a"/></g><g clip-path="url(#c2)"><path d="M1007.4 379.4L1022.0 672.7M996.4 380.0L1011.0 673.2M985.4 380.5L1000.1 673.8M974.4 381.1L989.1 674.3M963.4 381.6L978.1 674.9M952.4 382.2L967.1 675.4M941.4 382.7L956.1 676.0M930.5 383.3L945.1 676.5M919.5 383.8L934.1 677.1M908.5 384.4L923.2 677.6M897.5 384.9L912.2 678.2M886.5 385.5L901.2 678.7M875.5 386.0L890.2 679.3M864.5 386.6L879.2 679.8M853.6 387.1L868.2 680.4M842.6 387.7L857.2 680.9M831.6 388.2L846.2 681.5M820.6 388.8L835.3 682.0M809.6 389.3L824.3 682.6M798.6 389.9L813.3 683.1M787.6 390.4L802.3 683.7M776.7 391.0L791.3 684.2M765.7 391.5L780.3 684.8M754.7 392.1L769.3 685.3M743.7 392.6L758.4 685.9M732.7 393.2L747.4 686.4M721.7 393.7L736.4 687.0M710.7 394.3L725.4 687.5M699.8 394.8L714.4 688.1M688.8 395.4L703.4 688.6M677.8 395.9L692.4 689.2M644.1 446.9L906.7 315.6M652.6 463.9L915.2 332.6M661.1 480.9L923.7 349.6M669.6 497.9L932.2 366.6M678.1 514.9L940.7 383.6M686.6 531.9L949.2 400.6M695.1 548.9L957.7 417.6M703.6 565.9L966.2 434.6M712.1 582.9L974.7 451.6M720.6 599.9L983.2 468.5M729.1 616.8L991.7 485.5M737.6 633.8L1000.2 502.5M746.1 650.8L1008.7 519.5M754.6 667.8L1017.2 536.5M763.1 684.8L1025.7 553.5M771.6 701.8L1034.2 570.5M780.1 718.8L1042.7 587.5M788.6 735.8L1051.2 604.5M797.1 752.8L1059.7 621.5" stroke="#0a0414" stroke-width="1" fill="none"/></g><polygon points="821.8,494.8 882.0,460.8 874.0,579.0 863.7,585.3 821.8,607.6" fill="none" stroke="#0a0414" stroke-width="1"/><polygon points="821.8,420.8 842.7,406.1 927.8,427.8 882.0,460.8 821.8,494.8" fill="#46098e"/><g clip-path="url(#c3)"><path d="M802.5 305.1L1007.9 357.5M799.4 317.2L1004.8 369.6M796.3 329.3L1001.7 381.7M793.2 341.4L998.7 393.8M790.2 353.5L995.6 405.9M787.1 365.6L992.5 418.1M784.0 377.7L989.4 430.2M780.9 389.8L986.3 442.3M777.8 401.9L983.2 454.4M774.7 414.1L980.1 466.5M771.6 426.2L977.0 478.6M768.5 438.3L973.9 490.7M765.4 450.4L970.8 502.8M762.3 462.5L967.7 514.9M759.2 474.6L964.6 527.1M756.1 486.7L961.6 539.2M753.0 498.8L958.5 551.3M750.0 510.9L955.4 563.4M746.9 523.1L952.3 575.5M743.8 535.2L949.2 587.6M740.7 547.3L946.1 599.7M1038.8 495.7L867.3 620.4M1027.6 480.3L856.1 605.0M1016.4 464.9L845.0 589.6M1005.2 449.6L833.8 574.3M994.1 434.2L822.6 558.9M982.9 418.8L811.4 543.5M971.7 403.5L800.2 528.2M960.5 388.1L789.1 512.8M949.4 372.7L777.9 497.4M938.2 357.4L766.7 482.1M927.0 342.0L755.5 466.7M915.8 326.6L744.4 451.3M904.6 311.3L733.2 436.0M893.5 295.9L722.0 420.6M882.3 280.5L710.8 405.2" stroke="#0a0414" stroke-width="1" fill="none"/></g><polygon points="821.8,420.8 842.7,406.1 927.8,427.8 882.0,460.8 821.8,494.8" fill="none" stroke="#0a0414" stroke-width="1"/><polygon points="622.0,334.0 670.0,293.0 670.0,840.0 622.0,882.0" fill="#2e10c4"/><g clip-path="url(#c4)"><polygon points="622,336 646,316 646,420 636,440 622,445" fill="#3828e0" opacity="0.75"/></g><path d="M622.0 334.0L622.0 882.0M634.0 323.8L634.0 871.5M646.0 313.5L646.0 861.0M658.0 303.2L658.0 850.5M670.0 293.0L670.0 840.0M622.0 334.0L670.0 293.0M622.0 353.6L670.0 312.5M622.0 373.1L670.0 332.1M622.0 392.7L670.0 351.6M622.0 412.3L670.0 371.1M622.0 431.9L670.0 390.7M622.0 451.4L670.0 410.2M622.0 471.0L670.0 429.8M622.0 490.6L670.0 449.3M622.0 510.1L670.0 468.8M622.0 529.7L670.0 488.4M622.0 549.3L670.0 507.9M622.0 568.9L670.0 527.4M622.0 588.4L670.0 547.0M622.0 608.0L670.0 566.5M622.0 627.6L670.0 586.0M622.0 647.1L670.0 605.6M622.0 666.7L670.0 625.1M622.0 686.3L670.0 644.6M622.0 705.9L670.0 664.2M622.0 725.4L670.0 683.7M622.0 745.0L670.0 703.2M622.0 764.6L670.0 722.8M622.0 784.1L670.0 742.3M622.0 803.7L670.0 761.9M622.0 823.3L670.0 781.4M622.0 842.9L670.0 800.9M622.0 862.4L670.0 820.5M622.0 882.0L670.0 840.0" stroke="#0a0414" stroke-width="1" fill="none"/><polygon points="646.6,314.0 798.0,357.0 798.0,892.0 646.4,862.0" fill="#2e10c4"/><g clip-path="url(#c5)"><polygon points="646,330 700,340 690,400 646,410" fill="#3018d0" opacity="0.4"/><ellipse cx="695" cy="540" rx="32" ry="22" fill="#2020e8"/><ellipse cx="700" cy="545" rx="20" ry="12" fill="#1838f0" opacity="0.8"/><polygon points="725,728 772,690 798,700 798,892 740,885 770,800" fill="#44099a" opacity="0.85"/></g><path d="M646.6 314.0L646.4 862.0M665.5 319.4L665.4 865.8M684.5 324.8L684.3 869.5M703.4 330.1L703.2 873.2M722.3 335.5L722.2 877.0M741.2 340.9L741.1 880.8M760.1 346.2L760.1 884.5M779.1 351.6L779.0 888.2M798.0 357.0L798.0 892.0M646.6 314.0L798.0 357.0M646.6 333.6L798.0 376.1M646.6 353.1L798.0 395.2M646.6 372.7L798.0 414.3M646.6 392.3L798.0 433.4M646.6 411.9L798.0 452.5M646.6 431.4L798.0 471.6M646.5 451.0L798.0 490.8M646.5 470.6L798.0 509.9M646.5 490.1L798.0 529.0M646.5 509.7L798.0 548.1M646.5 529.3L798.0 567.2M646.5 548.9L798.0 586.3M646.5 568.4L798.0 605.4M646.5 588.0L798.0 624.5M646.5 607.6L798.0 643.6M646.5 627.1L798.0 662.7M646.5 646.7L798.0 681.8M646.5 666.3L798.0 700.9M646.5 685.9L798.0 720.0M646.5 705.4L798.0 739.1M646.5 725.0L798.0 758.2M646.4 744.6L798.0 777.4M646.4 764.1L798.0 796.5M646.4 783.7L798.0 815.6M646.4 803.3L798.0 834.7M646.4 822.9L798.0 853.8M646.4 842.4L798.0 872.9M646.4 862.0L798.0 892.0" stroke="#0a0414" stroke-width="1" fill="none"/><polygon points="540.0,715.0 606.0,704.0 630.0,679.0 752.3,552.2 772.0,560.0 772.0,690.0 696.0,698.0 564.0,845.0 549.0,852.0" fill="#2e10c4"/><g clip-path="url(#c6)"><path d="M610 700 Q650 640 700 600 L696 700 Q670 735 640 760 Q615 745 610 700 Z" fill="#2418e0"/><path d="M645 660 Q668 625 700 600 L696 702 Q680 722 662 728 Q640 700 645 660 Z" fill="#0a3cff"/><path d="M662 650 Q678 620 700 600 L696 702 Q684 712 674 712 Q660 690 662 650 Z" fill="#0090ff"/><path d="M676 630 Q686 612 700 600 L696 702 Q688 706 683 700 Q674 670 676 630 Z" fill="#00dce8"/><path d="M688 620 Q692 612 700 600 L696 702 Q692 704 690 690 Q686 660 688 620 Z" fill="#30b070"/><polygon points="540,715 580,708 575,760 560,800 549,852" fill="#44099a" opacity="0.85"/><polygon points="549,852 564,845 650,752 640,745 590,790 565,815" fill="#44099a" opacity="0.9"/></g><g clip-path="url(#c6)"><path d="M951.0 384.1L986.9 982.6M941.5 384.6L977.4 983.2M932.0 385.2L967.9 983.7M922.5 385.8L958.4 984.3M913.0 386.3L949.0 984.9M903.6 386.9L939.5 985.4M894.1 387.5L930.0 986.0M884.6 388.0L920.5 986.6M875.1 388.6L911.0 987.1M865.6 389.2L901.5 987.7M856.2 389.8L892.1 988.3M846.7 390.3L882.6 988.8M837.2 390.9L873.1 989.4M827.7 391.5L863.6 990.0M818.2 392.0L854.1 990.6M808.7 392.6L844.6 991.1M799.3 393.2L835.2 991.7M789.8 393.7L825.7 992.3M780.3 394.3L816.2 992.8M770.8 394.9L806.7 993.4M761.3 395.4L797.2 994.0M751.8 396.0L787.8 994.5M742.4 396.6L778.3 995.1M732.9 397.1L768.8 995.7M723.4 397.7L759.3 996.2M713.9 398.3L749.8 996.8M704.4 398.9L740.3 997.4M694.9 399.4L730.9 997.9M685.5 400.0L721.4 998.5M676.0 400.6L711.9 999.1M666.5 401.1L702.4 999.7M657.0 401.7L692.9 1000.2M647.5 402.3L683.4 1000.8M638.0 402.8L674.0 1001.4M628.6 403.4L664.5 1001.9M619.1 404.0L655.0 1002.5M609.6 404.5L645.5 1003.1M600.1 405.1L636.0 1003.6M590.6 405.7L626.5 1004.2M581.1 406.3L617.1 1004.8M571.7 406.8L607.6 1005.3M562.2 407.4L598.1 1005.9M552.7 408.0L588.6 1006.5M543.2 408.5L579.1 1007.1M533.7 409.1L569.6 1007.6M524.2 409.7L560.2 1008.2M514.8 410.2L550.7 1008.8M505.3 410.8L541.2 1009.3M495.8 411.4L531.7 1009.9M486.3 411.9L522.2 1010.5M476.8 412.5L512.7 1011.0M467.4 413.1L503.3 1011.6M457.9 413.6L493.8 1012.2M448.4 414.2L484.3 1012.7M438.9 414.8L474.8 1013.3M429.4 415.4L465.3 1013.9M419.9 415.9L455.8 1014.4M410.5 416.5L446.4 1015.0M401.0 417.1L436.9 1015.6M391.5 417.6L427.4 1016.2M382.0 418.2L417.9 1016.7M372.5 418.8L408.4 1017.3M363.0 419.3L399.0 1017.9M353.6 419.9L389.5 1018.4M344.1 420.5L380.0 1019.0M334.6 421.0L370.5 1019.6M325.1 421.6L361.0 1020.1M214.6 695.7L628.1 261.6M227.7 708.2L641.2 274.0M240.7 720.6L654.2 286.4M253.7 733.0L667.2 298.8M266.8 745.4L680.3 311.2M279.8 757.8L693.3 323.6M292.8 770.2L706.3 336.0M305.9 782.6L719.4 348.5M318.9 795.1L732.4 360.9M331.9 807.5L745.4 373.3M345.0 819.9L758.5 385.7M358.0 832.3L771.5 398.1M371.0 844.7L784.6 410.5M384.1 857.1L797.6 422.9M397.1 869.5L810.6 435.3M410.1 882.0L823.7 447.8M423.2 894.4L836.7 460.2M436.2 906.8L849.7 472.6M449.2 919.2L862.8 485.0M462.3 931.6L875.8 497.4M475.3 944.0L888.8 509.8M488.3 956.4L901.9 522.2M501.4 968.9L914.9 534.7M514.4 981.3L927.9 547.1M527.4 993.7L941.0 559.5M540.5 1006.1L954.0 571.9M553.5 1018.5L967.0 584.3M566.6 1030.9L980.1 596.7M579.6 1043.3L993.1 609.1M592.6 1055.7L1006.1 621.6M605.7 1068.2L1019.2 634.0M618.7 1080.6L1032.2 646.4M631.7 1093.0L1045.2 658.8M644.8 1105.4L1058.3 671.2M657.8 1117.8L1071.3 683.6M670.8 1130.2L1084.3 696.0M683.9 1142.6L1097.4 708.5" stroke="#0a0414" stroke-width="1" fill="none"/></g><polygon points="540.0,715.0 606.0,704.0 630.0,679.0 752.3,552.2 772.0,560.0 772.0,690.0 696.0,698.0 564.0,845.0 549.0,852.0" fill="none" stroke="#0a0414" stroke-width="1"/><polygon points="513.0,845.0 538.0,817.0 560.0,800.0 564.0,845.0 549.0,852.0" fill="#46098e"/><g clip-path="url(#c7)"><path d="M510.5 738.3L610.1 768.1M505.1 756.5L604.7 786.3M499.6 774.7L599.2 804.5M494.2 792.9L593.8 822.7M488.7 811.1L588.3 840.9M483.2 829.3L582.8 859.1M477.8 847.5L577.4 877.3M472.3 865.7L571.9 895.5M466.9 883.9L566.5 913.7M451.9 815.4L523.7 740.1M462.1 825.0L533.8 749.7M472.2 834.7L543.9 759.4M482.4 844.3L554.1 769.0M492.5 854.0L564.2 778.7M502.6 863.7L574.4 788.3M512.8 873.3L584.5 798.0M522.9 883.0L594.6 807.7M533.1 892.6L604.8 817.3M543.2 902.3L614.9 827.0M553.3 911.9L625.1 836.6" stroke="#0a0414" stroke-width="1" fill="none"/></g><polygon points="513.0,845.0 538.0,817.0 560.0,800.0 564.0,845.0 549.0,852.0" fill="none" stroke="#0a0414" stroke-width="1"/><polygon points="513.0,845.0 549.0,852.0 564.0,845.0 696.0,698.0 721.0,679.0 761.6,694.6 594.0,870.0" fill="#46098e"/><g clip-path="url(#c8)"><path d="M268.1 767.5L609.8 406.3M277.6 776.4L619.3 415.2M287.0 785.3L628.7 424.2M296.5 794.3L638.2 433.1M305.9 803.2L647.6 442.0M315.4 812.1L657.1 451.0M324.8 821.1L666.5 459.9M334.2 830.0L675.9 468.8M343.7 838.9L685.4 477.8M353.1 847.9L694.8 486.7M362.6 856.8L704.3 495.6M372.0 865.7L713.7 504.6M381.5 874.7L723.2 513.5M390.9 883.6L732.6 522.4M400.3 892.5L742.0 531.4M409.8 901.5L751.5 540.3M419.2 910.4L760.9 549.2M428.7 919.4L770.4 558.2M438.1 928.3L779.8 567.1M447.6 937.2L789.3 576.0M457.0 946.2L798.7 585.0M466.4 955.1L808.2 593.9M475.9 964.0L817.6 602.8M485.3 973.0L827.0 611.8M494.8 981.9L836.5 620.7M504.2 990.8L845.9 629.6M513.7 999.8L855.4 638.6M523.1 1008.7L864.8 647.5M532.6 1017.6L874.3 656.5M542.0 1026.6L883.7 665.4M551.4 1035.5L893.1 674.3M560.9 1044.4L902.6 683.3M570.3 1053.4L912.0 692.2M579.8 1062.3L921.5 701.1M589.2 1071.2L930.9 710.1M598.7 1080.2L940.4 719.0M608.1 1089.1L949.8 727.9M617.5 1098.0L959.2 736.9M627.0 1107.0L968.7 745.8M636.4 1115.9L978.1 754.7M645.9 1124.8L987.6 763.7M655.3 1133.8L997.0 772.6M664.8 1142.7L1006.5 781.5M481.1 430.1L957.3 573.0M475.6 448.3L951.9 591.2M470.2 466.5L946.4 609.4M464.7 484.7L940.9 627.6M459.2 502.9L935.5 645.7M453.8 521.1L930.0 663.9M448.3 539.3L924.6 682.1M442.9 557.5L919.1 700.3M437.4 575.7L913.6 718.5M431.9 593.9L908.2 736.7M426.5 612.1L902.7 754.9M421.0 630.3L897.3 773.1M415.6 648.5L891.8 791.3M410.1 666.7L886.3 809.5M404.6 684.9L880.9 827.7M399.2 703.1L875.4 845.9M393.7 721.3L870.0 864.1M388.3 739.5L864.5 882.3M382.8 757.7L859.0 900.5M377.3 775.9L853.6 918.7M371.9 794.1L848.1 936.9M366.4 812.3L842.7 955.1M361.0 830.5L837.2 973.3M355.5 848.7L831.7 991.5M350.0 866.9L826.3 1009.7M344.6 885.1L820.8 1027.9M339.1 903.3L815.4 1046.1M333.7 921.4L809.9 1064.3M328.2 939.6L804.4 1082.5M322.7 957.8L799.0 1100.7M317.3 976.0L793.5 1118.9" stroke="#0a0414" stroke-width="1" fill="none"/></g><polygon points="513.0,845.0 549.0,852.0 564.0,845.0 696.0,698.0 721.0,679.0 761.6,694.6 594.0,870.0" fill="none" stroke="#0a0414" stroke-width="1"/><polygon points="695.5,613.4 752.3,552.2 771.5,560.0 771.5,690.0 724.0,678.0 696.0,702.0" fill="#14b0e0"/><g clip-path="url(#c9)"><polygon points="695,613 712,596 716,700 696,702" fill="#1c70f0"/><polygon points="712,596 722,585 726,700 716,700" fill="#10b0e0"/><polygon points="716,592 728,578 736,640 728,675 720,650" fill="#38b070"/><polygon points="719,586 727,577 731,605 724,618" fill="#e0e000"/><polygon points="740,610 771.5,600 771.5,690 745,690 752,650" fill="#2088f0" opacity="0.85"/><polygon points="736,560 752,552 760,575 740,600" fill="#40b080" opacity="0.8"/><ellipse cx="746" cy="581" rx="6.5" ry="8" fill="#ff9000"/><ellipse cx="746" cy="581" rx="4.8" ry="6.2" fill="#e02000"/><ellipse cx="746" cy="581" rx="3.4" ry="4.4" fill="#2020b0"/><ellipse cx="746" cy="606" rx="3.5" ry="4" fill="#2020b0"/><ellipse cx="751" cy="628" rx="3" ry="4" fill="#2040d0"/></g><g clip-path="url(#c9)"><path d="M882.8 471.2L894.8 770.6M878.6 471.4L890.6 770.7M874.4 471.5L886.4 770.9M870.2 471.7L882.2 771.1M866.0 471.9L878.0 771.2M861.8 472.0L873.8 771.4M857.6 472.2L869.6 771.6M853.4 472.4L865.4 771.7M849.2 472.6L861.2 771.9M845.0 472.7L857.0 772.1M840.8 472.9L852.8 772.2M836.6 473.1L848.6 772.4M832.4 473.2L844.4 772.6M828.2 473.4L840.2 772.8M824.0 473.6L836.0 772.9M819.8 473.7L831.8 773.1M815.6 473.9L827.6 773.3M811.4 474.1L823.4 773.4M807.2 474.2L819.2 773.6M803.1 474.4L815.0 773.8M798.9 474.6L810.8 773.9M794.7 474.7L806.6 774.1M790.5 474.9L802.4 774.3M786.3 475.1L798.2 774.4M782.1 475.2L794.0 774.6M777.9 475.4L789.8 774.8M773.7 475.6L785.7 774.9M769.5 475.7L781.5 775.1M765.3 475.9L777.3 775.3M761.1 476.1L773.1 775.4M756.9 476.2L768.9 775.6M752.7 476.4L764.7 775.8M748.5 476.6L760.5 775.9M744.3 476.7L756.3 776.1M740.1 476.9L752.1 776.3M735.9 477.1L747.9 776.4M731.7 477.3L743.7 776.6M727.5 477.4L739.5 776.8M723.3 477.6L735.3 776.9M719.1 477.8L731.1 777.1M714.9 477.9L726.9 777.3M710.7 478.1L722.7 777.5M706.5 478.3L718.5 777.6M702.3 478.4L714.3 777.8M698.1 478.6L710.1 778.0M693.9 478.8L705.9 778.1M689.7 478.9L701.7 778.3M685.5 479.1L697.5 778.5M681.3 479.3L693.3 778.6M677.2 479.4L689.1 778.8M673.0 479.6L684.9 779.0M668.8 479.8L680.7 779.1M664.6 479.9L676.5 779.3M660.4 480.1L672.3 779.5M656.2 480.3L668.1 779.6M652.0 480.4L663.9 779.8M647.8 480.6L659.8 780.0M643.6 480.8L655.6 780.1M639.4 480.9L651.4 780.3M635.2 481.1L647.2 780.5M631.0 481.3L643.0 780.6M626.8 481.4L638.8 780.8M622.6 481.6L634.6 781.0M618.4 481.8L630.4 781.1M614.2 482.0L626.2 781.3M610.0 482.1L622.0 781.5M605.8 482.3L617.8 781.6M601.6 482.5L613.6 781.8M597.4 482.6L609.4 782.0M593.2 482.8L605.2 782.2M589.0 483.0L601.0 782.3M584.8 483.1L596.8 782.5M580.6 483.3L592.6 782.7M576.4 483.5L588.4 782.8M572.2 483.6L584.2 783.0M525.9 560.5L788.4 416.1M528.2 564.7L790.7 420.3M530.5 568.9L793.0 424.5M532.8 573.1L795.4 428.7M535.2 577.3L797.7 432.9M537.5 581.5L800.0 437.1M539.8 585.7L802.3 441.4M542.1 589.9L804.6 445.6M544.4 594.1L806.9 449.8M546.7 598.4L809.2 454.0M549.0 602.6L811.6 458.2M551.4 606.8L813.9 462.4M553.7 611.0L816.2 466.6M556.0 615.2L818.5 470.8M558.3 619.4L820.8 475.0M560.6 623.6L823.1 479.2M562.9 627.8L825.4 483.4M565.2 632.0L827.7 487.6M567.5 636.2L830.1 491.8M569.9 640.4L832.4 496.0M572.2 644.6L834.7 500.2M574.5 648.8L837.0 504.4M576.8 653.0L839.3 508.6M579.1 657.2L841.6 512.9M581.4 661.4L843.9 517.1M583.7 665.6L846.3 521.3M586.1 669.9L848.6 525.5M588.4 674.1L850.9 529.7M590.7 678.3L853.2 533.9M593.0 682.5L855.5 538.1M595.3 686.7L857.8 542.3M597.6 690.9L860.1 546.5M599.9 695.1L862.4 550.7M602.2 699.3L864.8 554.9M604.6 703.5L867.1 559.1M606.9 707.7L869.4 563.3M609.2 711.9L871.7 567.5M611.5 716.1L874.0 571.7M613.8 720.3L876.3 575.9M616.1 724.5L878.6 580.1M618.4 728.7L880.9 584.3M620.7 732.9L883.3 588.6M623.1 737.1L885.6 592.8M625.4 741.3L887.9 597.0M627.7 745.6L890.2 601.2M630.0 749.8L892.5 605.4M632.3 754.0L894.8 609.6M634.6 758.2L897.1 613.8M636.9 762.4L899.5 618.0M639.3 766.6L901.8 622.2M641.6 770.8L904.1 626.4M643.9 775.0L906.4 630.6M646.2 779.2L908.7 634.8M648.5 783.4L911.0 639.0M650.8 787.6L913.3 643.2M653.1 791.8L915.6 647.4M655.4 796.0L918.0 651.6M657.8 800.2L920.3 655.8M660.1 804.4L922.6 660.1M662.4 808.6L924.9 664.3M664.7 812.8L927.2 668.5M667.0 817.1L929.5 672.7M669.3 821.3L931.8 676.9M671.6 825.5L934.2 681.1M674.0 829.7L936.5 685.3M676.3 833.9L938.8 689.5M678.6 838.1L941.1 693.7" stroke="#0a0414" stroke-width="0.9" fill="none"/></g><polygon points="695.5,613.4 752.3,552.2 771.5,560.0 771.5,690.0 724.0,678.0 696.0,702.0" fill="none" stroke="#0a0414" stroke-width="1"/><polygon points="724.0,678.0 733.0,672.0 771.5,682.0 771.5,690.0 762.7,688.5" fill="#46098e"/><g clip-path="url(#c10)"><path d="M716.2 615.5L807.9 640.3M714.9 620.3L806.6 645.1M713.6 625.2L805.3 649.9M712.3 630.0L804.0 654.8M711.0 634.8L802.7 659.6M709.7 639.7L801.4 664.4M708.4 644.5L800.1 669.2M707.1 649.3L798.8 674.1M705.8 654.1L797.5 678.9M704.5 659.0L796.2 683.7M703.2 663.8L794.9 688.6M701.9 668.6L793.6 693.4M700.6 673.4L792.3 698.2M699.3 678.3L791.0 703.0M698.0 683.1L789.7 707.9M696.7 687.9L788.4 712.7M695.4 692.8L787.1 717.5M694.1 697.6L785.8 722.3M692.8 702.4L784.5 727.2M691.5 707.2L783.2 732.0M690.2 712.1L781.9 736.8M688.9 716.9L780.6 741.7M687.6 721.7L779.3 746.5M676.1 654.0L757.6 605.1M681.3 662.6L762.8 613.7M686.4 671.1L767.9 622.3M691.6 679.7L773.0 630.8M696.7 688.3L778.2 639.4M701.9 696.9L783.3 648.0M707.0 705.4L788.5 656.6M712.2 714.0L793.6 665.1M717.3 722.6L798.8 673.7M722.5 731.2L803.9 682.3M727.6 739.7L809.1 690.9M732.7 748.3L814.2 699.4M737.9 756.9L819.4 708.0" stroke="#0a0414" stroke-width="1" fill="none"/></g><polygon points="724.0,678.0 733.0,672.0 771.5,682.0 771.5,690.0 762.7,688.5" fill="none" stroke="#0a0414" stroke-width="1"/><polygon points="501.0,704.0 671.4,528.8 752.3,552.2 630.0,679.0 606.0,704.0 541.7,716.0" fill="#46098e"/><g clip-path="url(#c11)"><polygon points="630,560 700,545 740,570 680,630 620,640" fill="#3a10c0" opacity="0.45"/></g><g clip-path="url(#c11)"><path d="M251.3 613.7L596.2 248.2M262.5 624.4L607.4 258.8M273.8 635.0L618.7 269.4M285.1 645.6L630.0 280.1M296.4 656.3L641.3 290.7M307.6 666.9L652.5 301.3M318.9 677.6L663.8 312.0M330.2 688.2L675.1 322.6M341.5 698.8L686.4 333.2M352.7 709.5L697.6 343.9M364.0 720.1L708.9 354.5M375.3 730.7L720.2 365.2M386.6 741.4L731.4 375.8M397.8 752.0L742.7 386.4M409.1 762.6L754.0 397.1M420.4 773.3L765.3 407.7M431.7 783.9L776.5 418.3M442.9 794.6L787.8 429.0M454.2 805.2L799.1 439.6M465.5 815.8L810.4 450.2M476.8 826.5L821.6 460.9M488.0 837.1L832.9 471.5M499.3 847.7L844.2 482.2M510.6 858.4L855.5 492.8M521.9 869.0L866.7 503.4M533.1 879.6L878.0 514.1M544.4 890.3L889.3 524.7M555.7 900.9L900.6 535.3M566.9 911.6L911.8 546.0M578.2 922.2L923.1 556.6M589.5 932.8L934.4 567.2M600.8 943.5L945.7 577.9M612.0 954.1L956.9 588.5M623.3 964.7L968.2 599.2M634.6 975.4L979.5 609.8M645.9 986.0L990.8 620.4M657.1 996.6L1002.0 631.1M461.3 290.2L944.0 430.2M455.9 308.9L938.6 448.9M450.5 327.7L933.2 467.7M445.0 346.4L927.7 486.4M439.6 365.1L922.3 505.1M434.2 383.9L916.9 523.8M428.7 402.6L911.5 542.6M423.3 421.3L906.0 561.3M417.9 440.0L900.6 580.0M412.5 458.8L895.2 598.8M407.0 477.5L889.7 617.5M401.6 496.2L884.3 636.2M396.2 515.0L878.9 654.9M390.7 533.7L873.4 673.7M385.3 552.4L868.0 692.4M379.9 571.1L862.6 711.1M374.4 589.9L857.1 729.8M369.0 608.6L851.7 748.6M363.6 627.3L846.3 767.3M358.1 646.0L840.8 786.0M352.7 664.8L835.4 804.8M347.3 683.5L830.0 823.5M341.8 702.2L824.6 842.2M336.4 721.0L819.1 860.9M331.0 739.7L813.7 879.7M325.6 758.4L808.3 898.4M320.1 777.1L802.8 917.1M314.7 795.9L797.4 935.9M309.3 814.6L792.0 954.6" stroke="#0a0414" stroke-width="1" fill="none"/></g><polygon points="501.0,704.0 671.4,528.8 752.3,552.2 630.0,679.0 606.0,704.0 541.7,716.0" fill="none" stroke="#0a0414" stroke-width="1"/><polygon points="773.0,378.0 821.3,337.0 821.5,885.0 773.4,925.0" fill="#2e10c4"/><g clip-path="url(#c12)"><polygon points="773,740 821,698 821.5,885 773.4,925" fill="#46098e"/><polygon points="800,830 821,810 821.5,885 805,900" fill="#3010c0" opacity="0.8"/></g><path d="M773.0 378.0L773.4 925.0M785.1 367.8L785.4 915.0M797.1 357.5L797.5 905.0M809.2 347.2L809.5 895.0M821.3 337.0L821.5 885.0M773.0 378.0L821.3 337.0M773.0 397.5L821.3 356.6M773.0 417.1L821.3 376.1M773.0 436.6L821.3 395.7M773.1 456.1L821.3 415.3M773.1 475.7L821.3 434.9M773.1 495.2L821.3 454.4M773.1 514.8L821.3 474.0M773.1 534.3L821.4 493.6M773.1 553.8L821.4 513.1M773.1 573.4L821.4 532.7M773.2 592.9L821.4 552.3M773.2 612.4L821.4 571.9M773.2 632.0L821.4 591.4M773.2 651.5L821.4 611.0M773.2 671.0L821.4 630.6M773.2 690.6L821.4 650.1M773.2 710.1L821.4 669.7M773.3 729.6L821.4 689.3M773.3 749.2L821.4 708.9M773.3 768.7L821.4 728.4M773.3 788.2L821.5 748.0M773.3 807.8L821.5 767.6M773.3 827.3L821.5 787.1M773.3 846.9L821.5 806.7M773.4 866.4L821.5 826.3M773.4 885.9L821.5 845.9M773.4 905.5L821.5 865.4M773.4 925.0L821.5 885.0" stroke="#0a0414" stroke-width="1" fill="none"/><path d="M719.8 256 H723.8 V300 H719.8 Z" fill="#7ef000"/><path d="M721.8 242 L727.5 256 Q727.5 259 721.8 259 Q716 259 716 256 Z" fill="#7ef000" stroke="#101010" stroke-width="0.7"/><path d="M706.5 301.3 Q722 290 741.2 312.5 L737 314 Q722 297 709 304 Z" fill="#7ef000" stroke="#101010" stroke-width="0.7"/><path d="M733 315.5 L743.7 305.4 L741.2 321.7 Z" fill="#7ef000" stroke="#101010" stroke-width="0.7"/><path d="M695.3 310.5 L707.5 301.8 L703.5 319.6 Z" fill="#7ef000" stroke="#101010" stroke-width="0.7"/><path d="M697 311 L751.4 321.7 L747 328.5 L699 317 Z" fill="#7ef000" stroke="#101010" stroke-width="0.7"/><path d="M914.7 440.5 L942.3 418.6" stroke="#7ef000" stroke-width="2.6"/><circle cx="934.6" cy="425.4" r="3.6" fill="none" stroke="#101010" stroke-width="4"/><circle cx="934.6" cy="425.4" r="3.6" fill="none" stroke="#7ef000" stroke-width="2.2"/><path d="M885 458.4 L913.7 440.5 L923.4 460.9 L923.4 470 L908.8 473.5 L898.2 483.2 L888 467.7 Z" fill="#7ef000" stroke="#101010" stroke-width="0.8"/><path d="M887 462 L893 464 L893 468 L888 467 Z M904 468 L910 470 L908 473 Z" fill="#fff"/><path d="M507.3 792.7 L527.4 778.2" stroke="#7ef000" stroke-width="2.6"/><path d="M497.3 777 Q506 760 522 765 Q533 770 537.5 789 L532 790 Q528 776 518 771 Q506 767 500 780 Z" fill="#7ef000" stroke="#101010" stroke-width="0.8"/><path d="M540.8 735.7 L549.8 736.9 L548 748 L573.2 764.8 L560 778 L538.6 778 L521.9 753.6 L533 747 L536 741 Z" fill="#7ef000" stroke="#101010" stroke-width="0.8"/><path d="M524 754 L530 760 M536 741 Q530 755 538 778 M548 748 Q540 760 546 778" stroke="#101010" stroke-width="0.7" fill="none"/><circle cx="508" cy="793.5" r="4.6" fill="#80c060"/><path d="M720.3 927.4 H723.8 V962 H720.3 Z" fill="#ff1010" stroke="#101010" stroke-width="0.5"/><path d="M716.2 963.1 Q722 958 727.4 963.1 L721.8 976.9 Z" fill="#ff1010" stroke="#101010" stroke-width="0.7"/><path d="M699.9 898 Q705 925 724 924 Q737 922 743.2 910.6 L739 909 Q733 917 723 918.5 Q709 918 705 896 Z" fill="#ff1010" stroke="#101010" stroke-width="0.8"/><path d="M692.2 895.3 L698.9 890.2 L705 892 L748.3 908.5 L728.9 909.6 L735 905 L700 900 Z" fill="#ff1010" stroke="#101010" stroke-width="0.7"/></svg><div class="lbl" style="left:706px;top:283px;width:45px;height:18px;"><span style="position:absolute;left:1px;top:2.5px;font-size:13.5px">-20.91</span></div><div class="lbl" style="left:758px;top:310px;width:44px;height:19px;"><span style="position:absolute;left:1px;top:3.0px;font-size:13.5px">-0.198</span></div><div class="lbl" style="left:898px;top:402px;width:44px;height:16px;"><span style="position:absolute;left:1px;top:1.5px;font-size:13.5px">-2.498</span></div><div class="lbl" style="left:949px;top:394px;width:40px;height:18px;"><span style="position:absolute;left:1px;top:2.5px;font-size:13.5px">0.177</span></div><div class="lbl" style="left:919px;top:437px;width:34px;height:17px;"><span style="position:absolute;left:1px;top:2.0px;font-size:13.5px">2.47</span></div><div class="lbl" style="left:905px;top:450px;width:40px;height:15px;"><span style="position:absolute;left:1px;top:1.0px;font-size:13.5px">66.22</span></div><div class="lbl" style="left:545px;top:708px;width:45px;height:19px;"><span style="position:absolute;left:1px;top:3.0px;font-size:13.5px">-2.498</span></div><div class="lbl" style="left:571px;top:740px;width:36px;height:17px;"><span style="position:absolute;left:1px;top:2.0px;font-size:13.5px">-2.47</span></div><div class="lbl" style="left:582px;top:754px;width:39px;height:16px;"><span style="position:absolute;left:1px;top:1.5px;font-size:13.5px">0.027</span></div><div class="lbl" style="left:538px;top:767px;width:44px;height:16px;"><span style="position:absolute;left:1px;top:1.5px;font-size:13.5px">-66.22</span></div><div class="lbl" style="left:534px;top:776px;width:31px;height:14px;"><span style="position:absolute;left:1px;top:0.5px;font-size:13.5px">0.00</span></div><div class="lbl" style="left:495px;top:788px;width:43px;height:18px;"><span style="position:absolute;left:1px;top:2.5px;font-size:13.5px">-0.177</span></div><div class="lbl" style="left:705px;top:891px;width:41px;height:15px;"><span style="position:absolute;left:1px;top:1.0px;font-size:13.5px">23.33</span></div><div class="lbl" style="left:759px;top:894px;width:38px;height:17px;"><span style="position:absolute;left:1px;top:2.0px;font-size:13.5px">0.252</span></div><svg class="a" style="left:1280px;top:240px" width="160" height="600"><ellipse cx="1369" cy="332.5" rx="46" ry="23.5" fill="none" stroke="#c4c4c4" stroke-width="11" transform="translate(-1280,-240)"/><g transform="translate(-1280,-240)"><polygon points="1333,288.5 1361.6,272.2 1401.7,281.5 1379,297" fill="#5a5a5a" stroke="#111" stroke-width="1.2"/><polygon points="1333,288.5 1379,297 1378,346 1337,329.7" fill="#626262" stroke="#111" stroke-width="1.2"/><polygon points="1379,297 1401.7,281.5 1399,319.3 1378,346" fill="#585858" stroke="#111" stroke-width="1.2"/><path d="M1361.6 272.2 L1362 310 L1337 329.7 M1362 310 L1399 319.3" stroke="#444" stroke-width="0.8" fill="none"/><text x="1349" y="322" font-family="Liberation Sans" font-size="9" fill="#fff">+Y</text><path d="M1322 311 L1339 308 M1330 304 L1333 315" stroke="#333" stroke-width="2"/><path d="M1333 360 L1348 350 M1343 352 L1339 345 M1342 353 L1350 356" stroke="#333" stroke-width="2.5"/><path d="M1408 338 L1423 343" stroke="#333" stroke-width="1.2"/></g><rect x="95" y="196.00" width="32" height="19.43" fill="#b00000"/><rect x="95" y="215.04" width="32" height="19.43" fill="#dc0000"/><rect x="95" y="234.07" width="32" height="19.43" fill="#ff0a00"/><rect x="95" y="253.11" width="32" height="19.43" fill="#ff4800"/><rect x="95" y="272.14" width="32" height="19.43" fill="#ff7800"/><rect x="95" y="291.17" width="32" height="19.43" fill="#ffaa00"/><rect x="95" y="310.21" width="32" height="19.43" fill="#ffcc00"/><rect x="95" y="329.25" width="32" height="19.43" fill="#ffe800"/><rect x="95" y="348.28" width="32" height="19.43" fill="#d8e400"/><rect x="95" y="367.32" width="32" height="19.43" fill="#80ac00"/><rect x="95" y="386.35" width="32" height="19.43" fill="#2a7400"/><rect x="95" y="405.38" width="32" height="19.43" fill="#007a30"/><rect x="95" y="424.42" width="32" height="19.43" fill="#00b890"/><rect x="95" y="443.46" width="32" height="19.43" fill="#00e8dc"/><rect x="95" y="462.49" width="32" height="19.43" fill="#00c0f8"/><rect x="95" y="481.52" width="32" height="19.43" fill="#0068ff"/><rect x="95" y="500.56" width="32" height="19.43" fill="#0010ff"/><rect x="95" y="519.60" width="32" height="19.43" fill="#2000d8"/><rect x="95" y="538.63" width="32" height="19.43" fill="#3000a8"/><rect x="95" y="557.66" width="32" height="19.43" fill="#480080"/><rect x="95.5" y="196.5" width="31.5" height="380.2" fill="none" stroke="#000" stroke-width="1.2"/><path d="M85 196.0 H95" stroke="#000" stroke-width="1.5"/><path d="M85 227.6 H95" stroke="#000" stroke-width="1.5"/><path d="M85 259.3 H95" stroke="#000" stroke-width="1.5"/><path d="M85 291.0 H95" stroke="#000" stroke-width="1.5"/><path d="M85 322.8 H95" stroke="#000" stroke-width="1.5"/><path d="M85 354.5 H95" stroke="#000" stroke-width="1.5"/><path d="M85 386.3 H95" stroke="#000" stroke-width="1.5"/><path d="M85 418.0 H95" stroke="#000" stroke-width="1.5"/><path d="M85 449.7 H95" stroke="#000" stroke-width="1.5"/><path d="M85 481.5 H95" stroke="#000" stroke-width="1.5"/><path d="M85 513.2 H95" stroke="#000" stroke-width="1.5"/><path d="M85 545.0 H95" stroke="#000" stroke-width="1.5"/><path d="M85 576.7 H95" stroke="#000" stroke-width="1.5"/></svg><div class="leg" style="left:1296.3px;top:421.1px;">29.90</div><div class="leg" style="left:1296.3px;top:452.6px;">27.5</div><div class="leg" style="left:1296.3px;top:484.4px;">25.0</div><div class="leg" style="left:1296.3px;top:516.1px;">22.5</div><div class="leg" style="left:1296.3px;top:547.8px;">20.0</div><div class="leg" style="left:1296.3px;top:579.6px;">17.5</div><div class="leg" style="left:1296.3px;top:611.3px;">15.0</div><div class="leg" style="left:1296.3px;top:643.0px;">12.5</div><div class="leg" style="left:1296.3px;top:674.8px;">10.0</div><div class="leg" style="left:1296.3px;top:706.5px;">7.5</div><div class="leg" style="left:1296.3px;top:738.3px;">5.0</div><div class="leg" style="left:1296.3px;top:770.0px;">2.5</div><div class="leg" style="left:1296.3px;top:818.9px;">0.00</div><div class="a" style="left:1374px;top:378.6px;font-size:20px;color:#111;">[ksi]</div>
</body></html>
